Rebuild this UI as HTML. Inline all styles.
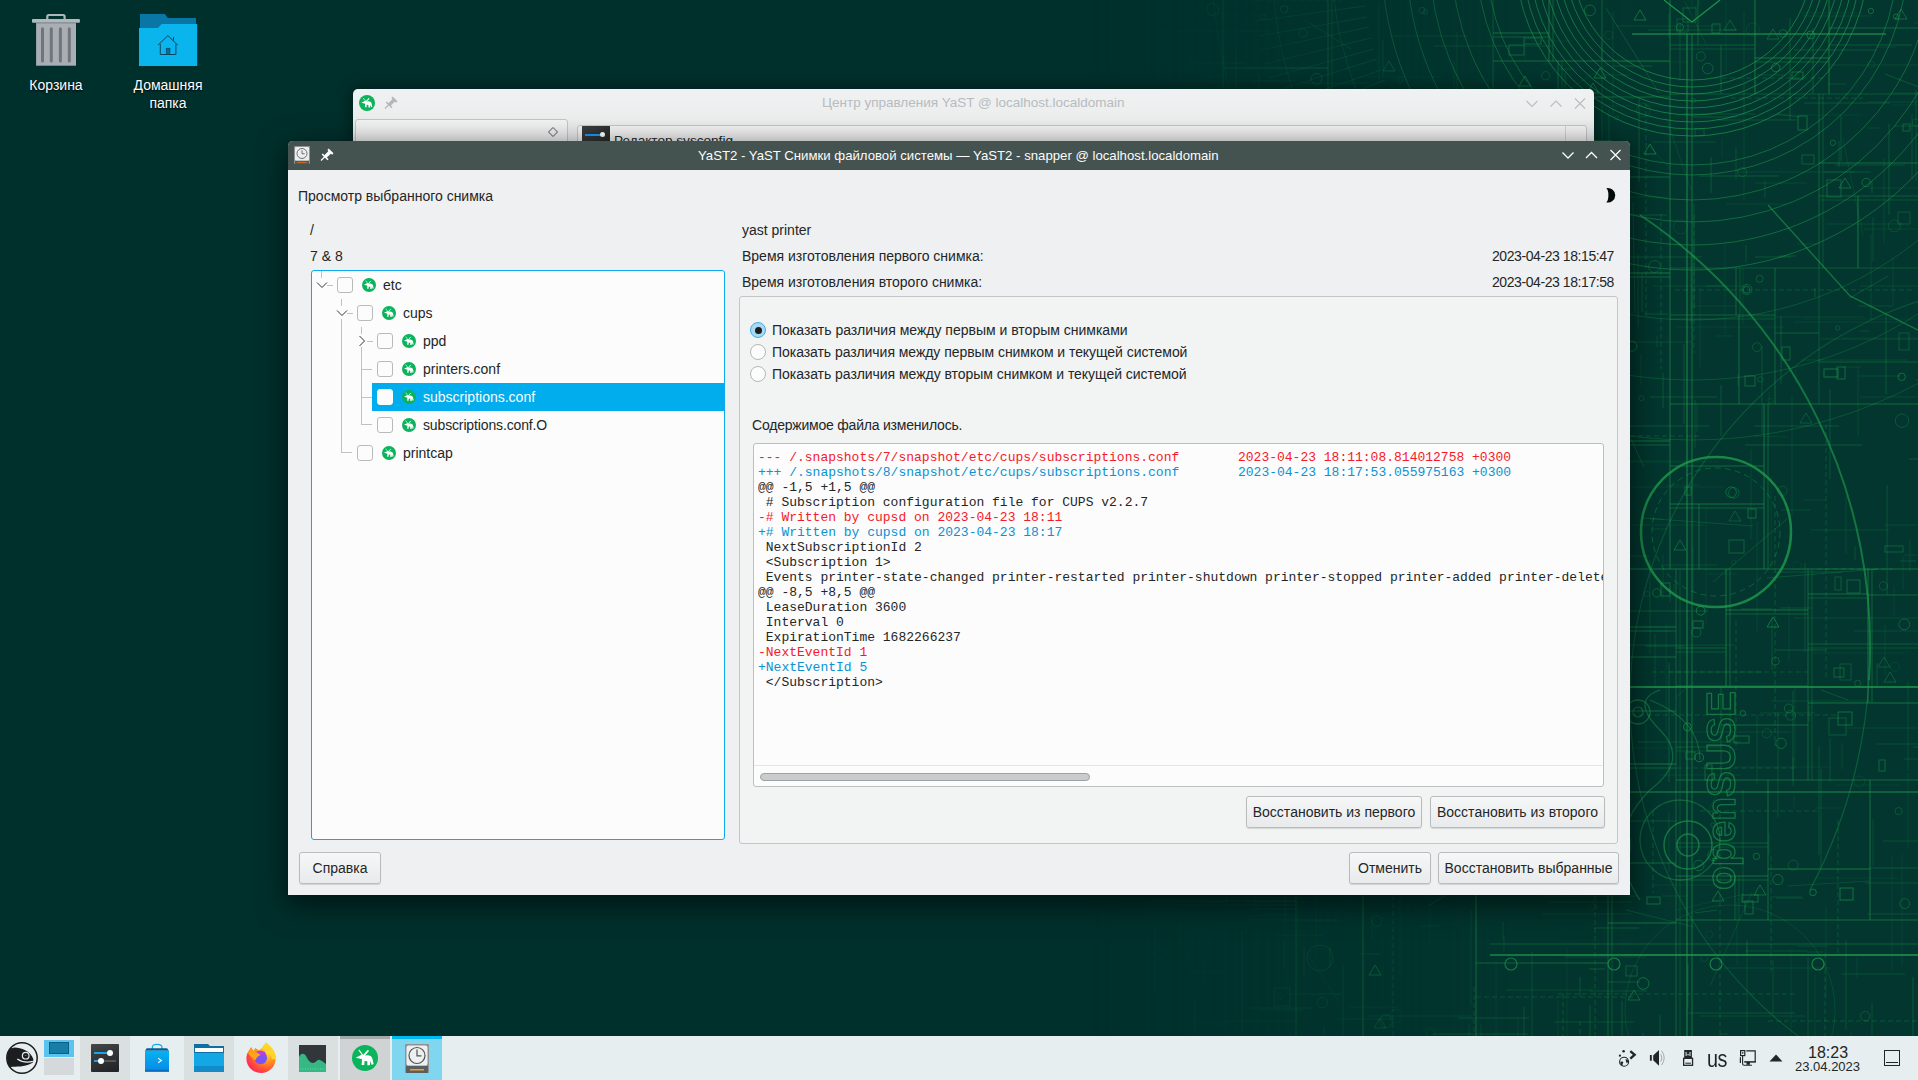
<!DOCTYPE html>
<html><head><meta charset="utf-8">
<style>
*{margin:0;padding:0;box-sizing:border-box}
html,body{width:1918px;height:1080px;overflow:hidden}
body{background:#00302c;font-family:"Liberation Sans",sans-serif;position:relative;color:#232627}
.a{position:absolute}
.t{position:absolute;font-size:14px;line-height:16px;white-space:nowrap;color:#232627}
.mono{position:absolute;font-family:"Liberation Mono",monospace;font-size:13px;line-height:15px;white-space:pre;color:#232627}
.btn{position:absolute;border:1px solid #b9bbbe;border-radius:3px;background:linear-gradient(#f6f7f7,#e9eaeb);box-shadow:0 1px 1px rgba(0,0,0,.12);font-size:14px;line-height:16px;text-align:center;color:#232627;white-space:nowrap}
.cb{position:absolute;width:16px;height:16px;border:1px solid #b8babc;border-radius:3px;background:#fcfcfc}
</style></head><body>
<svg width="0" height="0" style="position:absolute"><defs><symbol id="yast" viewBox="0 0 26 26"><circle cx="13" cy="13" r="13" fill="#0bb35c"/><path d="M3.7 12.7L9.5 9.8Q11 9 12.5 10L13.5 10.4Q19 9.6 20.3 13.2L21.6 19L19.6 19.9L18.6 16L17.8 20.2L15.4 20.2L15.3 16.2L12.6 16L12.2 19.9L9.6 19.9L10 14.3Q8 13.6 3.7 12.7Z" fill="#fff"/><path d="M10.5 9.8L6.8 4.8" stroke="#fff" stroke-width="1.1"/><path d="M12 10.4L16.4 5.4" stroke="#fff" stroke-width="1.7"/></symbol></defs></svg>
<svg class="a" style="left:0;top:0" width="1918" height="1080" viewBox="0 0 1918 1080">
<defs><linearGradient id="fade" x1="0" y1="0" x2="1918" y2="0" gradientUnits="userSpaceOnUse"><stop offset="0.57" stop-color="#fff" stop-opacity="0"/><stop offset="0.68" stop-color="#fff" stop-opacity="0.4"/><stop offset="0.78" stop-color="#fff" stop-opacity="0.85"/><stop offset="0.86" stop-color="#fff" stop-opacity="1"/></linearGradient><mask id="m"><rect width="1918" height="1080" fill="url(#fade)"/></mask></defs>
<rect width="1918" height="1080" fill="#00302c"/>
<rect width="1918" height="1080" fill="#02362e" mask="url(#m)"/>
<g mask="url(#m)" fill="none" stroke="#21a04f" stroke-width="1">
<path d="M1150 569H1918" stroke-opacity="0.56" stroke-width="1" />
<path d="M1670 0V569" stroke-opacity="0.56" stroke-width="1" />
<path d="M1150 177H1670" stroke-opacity="0.46" stroke-width="1" />
<path d="M1493 0V177" stroke-opacity="0.34" stroke-width="1" />
<path d="M1328 0V177" stroke-opacity="0.50" stroke-width="1" />
<path d="M1332 0V177" stroke-opacity="0.35" stroke-width="1" />
<path d="M1223 0V177" stroke-opacity="0.62" stroke-width="1" />
<path d="M1150 110H1223" stroke-opacity="0.35" stroke-width="1" />
<circle cx="1212.6" cy="9.5" r="5.9" stroke-opacity="0.53" stroke-width="1" />
<path d="M1170 171L1176 161L1182 171Z" stroke-opacity="0.46" stroke-width="1" />
<path d="M1223 68H1328" stroke-opacity="0.63" stroke-width="1" />
<circle cx="1263.4" cy="17.2" r="2.7" stroke-opacity="0.34" stroke-width="1" />
<circle cx="1284.3" cy="9.2" r="3.7" stroke-opacity="0.50" stroke-width="1" />
<circle cx="1303.0" cy="32.9" r="4.2" stroke-opacity="0.39" stroke-width="1" />
<circle cx="1316.5" cy="78.8" r="5.5" stroke-opacity="0.52" stroke-width="1" />
<circle cx="1422.1" cy="10.4" r="3.1" stroke-opacity="0.31" stroke-width="1" />
<path d="M1361 134L1367 124L1373 134Z" stroke-opacity="0.58" stroke-width="1" />
<path d="M1383 71L1389 61L1395 71Z" stroke-opacity="0.46" stroke-width="1" />
<path d="M1493 61H1670" stroke-opacity="0.56" stroke-width="1" />
<path d="M1549 0V61" stroke-opacity="0.63" stroke-width="1" />
<path d="M1553 0V61" stroke-opacity="0.44" stroke-width="1" />
<path d="M1493 33H1549" stroke-opacity="0.62" stroke-width="1" />
<path d="M1493 37H1549" stroke-opacity="0.43" stroke-width="1" />
<rect x="1509" y="45" width="15" height="10" stroke-opacity="0.49" stroke-width="1" />
<rect x="1524" y="38" width="17" height="6" stroke-opacity="0.48" stroke-width="1" />
<path d="M1602 0V61" stroke-opacity="0.39" stroke-width="1" />
<circle cx="1589.9" cy="10.4" r="5.4" stroke-opacity="0.45" stroke-width="1" />
<path d="M1634 20L1640 10L1646 20Z" stroke-opacity="0.57" stroke-width="1" />
<path d="M1558 61V177" stroke-opacity="0.43" stroke-width="1" />
<path d="M1562 61V177" stroke-opacity="0.30" stroke-width="1" />
<path d="M1493 102H1558" stroke-opacity="0.62" stroke-width="1" />
<path d="M1519 86L1525 76L1531 86Z" stroke-opacity="0.52" stroke-width="1" />
<circle cx="1524.4" cy="162.7" r="5.4" stroke-opacity="0.33" stroke-width="1" />
<rect x="1506" y="160" width="8" height="12" stroke-opacity="0.56" stroke-width="1" />
<rect x="1523" y="135" width="16" height="10" stroke-opacity="0.32" stroke-width="1" />
<path d="M1558 97H1670" stroke-opacity="0.41" stroke-width="1" />
<path d="M1587 93L1593 83L1599 93Z" stroke-opacity="0.51" stroke-width="1" />
<path d="M1594 78L1600 68L1606 78Z" stroke-opacity="0.56" stroke-width="1" />
<rect x="1586" y="143" width="16" height="14" stroke-opacity="0.44" stroke-width="1" />
<rect x="1595" y="141" width="16" height="10" stroke-opacity="0.52" stroke-width="1" />
<path d="M1644 154L1650 144L1656 154Z" stroke-opacity="0.59" stroke-width="1" />
<path d="M1414 177V569" stroke-opacity="0.49" stroke-width="1" />
<path d="M1418 177V569" stroke-opacity="0.34" stroke-width="1" />
<path d="M1150 442H1414" stroke-opacity="0.47" stroke-width="1" />
<path d="M1150 334H1414" stroke-opacity="0.36" stroke-width="1" />
<path d="M1299 177V334" stroke-opacity="0.45" stroke-width="1" />
<rect x="1158" y="203" width="14" height="9" stroke-opacity="0.43" stroke-width="1" />
<rect x="1237" y="187" width="9" height="7" stroke-opacity="0.44" stroke-width="1" />
<circle cx="1401.6" cy="253.1" r="4.0" stroke-opacity="0.46" stroke-width="1" />
<path d="M1299 334V442" stroke-opacity="0.33" stroke-width="1" />
<path d="M1303 334V442" stroke-opacity="0.23" stroke-width="1" />
<circle cx="1212.1" cy="367.8" r="2.9" stroke-opacity="0.42" stroke-width="1" />
<path d="M1203 351L1209 341L1215 351Z" stroke-opacity="0.48" stroke-width="1" />
<path d="M1283 442V569" stroke-opacity="0.63" stroke-width="1" />
<path d="M1287 442V569" stroke-opacity="0.44" stroke-width="1" />
<path d="M1197 442V569" stroke-opacity="0.44" stroke-width="1" />
<rect x="1159" y="487" width="8" height="8" stroke-opacity="0.44" stroke-width="1" />
<circle cx="1182.7" cy="522.9" r="3.6" stroke-opacity="0.41" stroke-width="1" />
<circle cx="1265.8" cy="512.3" r="5.9" stroke-opacity="0.43" stroke-width="1" />
<path d="M1347 442V569" stroke-opacity="0.55" stroke-width="1" />
<path d="M1351 442V569" stroke-opacity="0.38" stroke-width="1" />
<rect x="1299" y="553" width="11" height="10" stroke-opacity="0.45" stroke-width="1" />
<rect x="1365" y="498" width="13" height="11" stroke-opacity="0.34" stroke-width="1" />
<circle cx="1394.2" cy="541.0" r="4.4" stroke-opacity="0.30" stroke-width="1" />
<path d="M1414 441H1670" stroke-opacity="0.57" stroke-width="1" />
<path d="M1414 445H1670" stroke-opacity="0.40" stroke-width="1" />
<path d="M1414 273H1670" stroke-opacity="0.65" stroke-width="1" />
<path d="M1414 277H1670" stroke-opacity="0.45" stroke-width="1" />
<path d="M1539 177V273" stroke-opacity="0.53" stroke-width="1" />
<path d="M1521 273V441" stroke-opacity="0.49" stroke-width="1" />
<path d="M1525 273V441" stroke-opacity="0.34" stroke-width="1" />
<rect x="1420" y="329" width="16" height="8" stroke-opacity="0.50" stroke-width="1" />
<circle cx="1472.3" cy="385.0" r="4.9" stroke-opacity="0.33" stroke-width="1" />
<circle cx="1632.0" cy="346.2" r="5.0" stroke-opacity="0.47" stroke-width="1" />
<path d="M1540 441V569" stroke-opacity="0.62" stroke-width="1" />
<path d="M1544 441V569" stroke-opacity="0.43" stroke-width="1" />
<path d="M1414 523H1540" stroke-opacity="0.37" stroke-width="1" />
<path d="M1414 527H1540" stroke-opacity="0.26" stroke-width="1" />
<path d="M1493 549L1499 539L1505 549Z" stroke-opacity="0.39" stroke-width="1" />
<rect x="1516" y="531" width="13" height="12" stroke-opacity="0.44" stroke-width="1" />
<path d="M1587 441V569" stroke-opacity="0.51" stroke-width="1" />
<circle cx="1601.5" cy="457.2" r="3.7" stroke-opacity="0.58" stroke-width="1" />
<path d="M1670 268H1918" stroke-opacity="0.32" stroke-width="1" />
<path d="M1670 94H1918" stroke-opacity="0.34" stroke-width="1" />
<path d="M1755 0V94" stroke-opacity="0.61" stroke-width="1" />
<path d="M1670 45H1755" stroke-opacity="0.36" stroke-width="1" />
<path d="M1670 49H1755" stroke-opacity="0.25" stroke-width="1" />
<path d="M1698 0V45" stroke-opacity="0.37" stroke-width="1" />
<rect x="1677" y="19" width="11" height="13" stroke-opacity="0.34" stroke-width="1" />
<circle cx="1679.8" cy="27.2" r="3.7" stroke-opacity="0.45" stroke-width="1" />
<rect x="1683" y="8" width="13" height="14" stroke-opacity="0.39" stroke-width="1" />
<path d="M1724 30L1730 20L1736 30Z" stroke-opacity="0.38" stroke-width="1" />
<rect x="1712" y="24" width="8" height="9" stroke-opacity="0.46" stroke-width="1" />
<path d="M1721 45V94" stroke-opacity="0.36" stroke-width="1" />
<circle cx="1700.8" cy="56.4" r="4.6" stroke-opacity="0.34" stroke-width="1" />
<circle cx="1707.7" cy="68.5" r="5.3" stroke-opacity="0.40" stroke-width="1" />
<path d="M1829 0V94" stroke-opacity="0.60" stroke-width="1" />
<path d="M1755 58H1829" stroke-opacity="0.56" stroke-width="1" />
<path d="M1755 62H1829" stroke-opacity="0.39" stroke-width="1" />
<path d="M1767 39L1773 29L1779 39Z" stroke-opacity="0.41" stroke-width="1" />
<circle cx="1783.0" cy="33.5" r="3.9" stroke-opacity="0.40" stroke-width="1" />
<circle cx="1810.8" cy="34.9" r="4.0" stroke-opacity="0.54" stroke-width="1" />
<rect x="1792" y="72" width="11" height="7" stroke-opacity="0.52" stroke-width="1" />
<circle cx="1775.7" cy="67.6" r="4.2" stroke-opacity="0.57" stroke-width="1" />
<path d="M1829 28H1918" stroke-opacity="0.46" stroke-width="1" />
<circle cx="1870.9" cy="10.9" r="2.7" stroke-opacity="0.50" stroke-width="1" />
<path d="M1895 19L1901 9L1907 19Z" stroke-opacity="0.47" stroke-width="1" />
<circle cx="1896.1" cy="16.6" r="2.6" stroke-opacity="0.50" stroke-width="1" />
<path d="M1819 94V268" stroke-opacity="0.41" stroke-width="1" />
<path d="M1823 94V268" stroke-opacity="0.29" stroke-width="1" />
<rect x="1798" y="116" width="9" height="14" stroke-opacity="0.50" stroke-width="1" />
<rect x="1695" y="129" width="9" height="7" stroke-opacity="0.31" stroke-width="1" />
<rect x="1802" y="155" width="12" height="9" stroke-opacity="0.39" stroke-width="1" />
<path d="M1819 196H1918" stroke-opacity="0.36" stroke-width="1" />
<path d="M1819 200H1918" stroke-opacity="0.25" stroke-width="1" />
<path d="M1819 163H1918" stroke-opacity="0.53" stroke-width="1" />
<circle cx="1832.9" cy="142.8" r="2.7" stroke-opacity="0.42" stroke-width="1" />
<rect x="1903" y="124" width="7" height="7" stroke-opacity="0.41" stroke-width="1" />
<circle cx="1866.2" cy="182.5" r="4.2" stroke-opacity="0.49" stroke-width="1" />
<rect x="1827" y="180" width="14" height="17" stroke-opacity="0.43" stroke-width="1" />
<path d="M1839 188L1845 178L1851 188Z" stroke-opacity="0.49" stroke-width="1" />
<path d="M1858 196V268" stroke-opacity="0.62" stroke-width="1" />
<rect x="1898" y="212" width="12" height="12" stroke-opacity="0.31" stroke-width="1" />
<path d="M1670 404H1918" stroke-opacity="0.52" stroke-width="1" />
<path d="M1775 268V404" stroke-opacity="0.46" stroke-width="1" />
<path d="M1670 315H1775" stroke-opacity="0.41" stroke-width="1" />
<path d="M1670 319H1775" stroke-opacity="0.29" stroke-width="1" />
<path d="M1736 268V315" stroke-opacity="0.41" stroke-width="1" />
<path d="M1740 268V315" stroke-opacity="0.29" stroke-width="1" />
<circle cx="1746.6" cy="289.8" r="3.4" stroke-opacity="0.47" stroke-width="1" />
<circle cx="1759.6" cy="278.8" r="3.5" stroke-opacity="0.36" stroke-width="1" />
<circle cx="1746.9" cy="289.5" r="5.1" stroke-opacity="0.39" stroke-width="1" />
<path d="M1739 315V404" stroke-opacity="0.53" stroke-width="1" />
<circle cx="1760.3" cy="379.4" r="2.7" stroke-opacity="0.31" stroke-width="1" />
<rect x="1745" y="376" width="10" height="10" stroke-opacity="0.47" stroke-width="1" />
<circle cx="1756.9" cy="347.1" r="4.4" stroke-opacity="0.31" stroke-width="1" />
<path d="M1819 268V404" stroke-opacity="0.34" stroke-width="1" />
<path d="M1775 333H1819" stroke-opacity="0.39" stroke-width="1" />
<rect x="1782" y="347" width="8" height="13" stroke-opacity="0.41" stroke-width="1" />
<path d="M1819 362H1918" stroke-opacity="0.39" stroke-width="1" />
<rect x="1899" y="333" width="10" height="17" stroke-opacity="0.34" stroke-width="1" />
<rect x="1837" y="367" width="8" height="12" stroke-opacity="0.50" stroke-width="1" />
<rect x="1824" y="369" width="14" height="8" stroke-opacity="0.56" stroke-width="1" />
<circle cx="1901.7" cy="376.8" r="3.7" stroke-opacity="0.51" stroke-width="1" />
<path d="M1764 404V569" stroke-opacity="0.59" stroke-width="1" />
<path d="M1768 404V569" stroke-opacity="0.41" stroke-width="1" />
<path d="M1670 504H1764" stroke-opacity="0.57" stroke-width="1" />
<path d="M1670 508H1764" stroke-opacity="0.40" stroke-width="1" />
<path d="M1670 466H1764" stroke-opacity="0.53" stroke-width="1" />
<rect x="1685" y="487" width="6" height="8" stroke-opacity="0.45" stroke-width="1" />
<circle cx="1733.8" cy="492.9" r="5.3" stroke-opacity="0.36" stroke-width="1" />
<circle cx="1731.1" cy="492.2" r="5.3" stroke-opacity="0.49" stroke-width="1" />
<path d="M1699 504V569" stroke-opacity="0.48" stroke-width="1" />
<path d="M1674 550L1680 540L1686 550Z" stroke-opacity="0.48" stroke-width="1" />
<rect x="1729" y="540" width="15" height="13" stroke-opacity="0.43" stroke-width="1" />
<path d="M1729 521L1735 511L1741 521Z" stroke-opacity="0.34" stroke-width="1" />
<rect x="1748" y="509" width="8" height="9" stroke-opacity="0.53" stroke-width="1" />
<rect x="1885" y="546" width="18" height="6" stroke-opacity="0.42" stroke-width="1" />
<path d="M1800 423L1806 413L1812 423Z" stroke-opacity="0.33" stroke-width="1" />
<path d="M1676 569V1036" stroke-opacity="0.41" stroke-width="1" />
<path d="M1680 569V1036" stroke-opacity="0.28" stroke-width="1" />
<path d="M1476 569V1036" stroke-opacity="0.63" stroke-width="1" />
<path d="M1150 799H1476" stroke-opacity="0.33" stroke-width="1" />
<path d="M1150 803H1476" stroke-opacity="0.23" stroke-width="1" />
<path d="M1350 569V799" stroke-opacity="0.45" stroke-width="1" />
<path d="M1150 673H1350" stroke-opacity="0.56" stroke-width="1" />
<path d="M1264 569V673" stroke-opacity="0.41" stroke-width="1" />
<path d="M1268 569V673" stroke-opacity="0.29" stroke-width="1" />
<circle cx="1168.6" cy="603.2" r="5.3" stroke-opacity="0.54" stroke-width="1" />
<circle cx="1250.7" cy="584.5" r="3.1" stroke-opacity="0.42" stroke-width="1" />
<path d="M1260 673V799" stroke-opacity="0.52" stroke-width="1" />
<rect x="1193" y="734" width="10" height="9" stroke-opacity="0.57" stroke-width="1" />
<rect x="1243" y="697" width="7" height="13" stroke-opacity="0.31" stroke-width="1" />
<rect x="1171" y="698" width="14" height="14" stroke-opacity="0.48" stroke-width="1" />
<circle cx="1415.4" cy="593.4" r="4.1" stroke-opacity="0.36" stroke-width="1" />
<circle cx="1456.7" cy="767.7" r="5.3" stroke-opacity="0.48" stroke-width="1" />
<path d="M1355 726L1361 716L1367 726Z" stroke-opacity="0.33" stroke-width="1" />
<path d="M1296 799V1036" stroke-opacity="0.57" stroke-width="1" />
<path d="M1150 901H1296" stroke-opacity="0.57" stroke-width="1" />
<path d="M1150 905H1296" stroke-opacity="0.40" stroke-width="1" />
<path d="M1226 799V901" stroke-opacity="0.50" stroke-width="1" />
<circle cx="1238.2" cy="825.6" r="4.1" stroke-opacity="0.41" stroke-width="1" />
<rect x="1268" y="810" width="13" height="11" stroke-opacity="0.42" stroke-width="1" />
<circle cx="1159.4" cy="954.5" r="5.1" stroke-opacity="0.40" stroke-width="1" />
<rect x="1274" y="988" width="16" height="18" stroke-opacity="0.30" stroke-width="1" />
<path d="M1296 889H1476" stroke-opacity="0.42" stroke-width="1" />
<path d="M1296 893H1476" stroke-opacity="0.29" stroke-width="1" />
<path d="M1396 799V889" stroke-opacity="0.57" stroke-width="1" />
<path d="M1400 799V889" stroke-opacity="0.40" stroke-width="1" />
<rect x="1459" y="808" width="9" height="18" stroke-opacity="0.43" stroke-width="1" />
<circle cx="1450.0" cy="818.7" r="4.4" stroke-opacity="0.59" stroke-width="1" />
<path d="M1363 889V1036" stroke-opacity="0.60" stroke-width="1" />
<circle cx="1322.3" cy="1002.6" r="5.2" stroke-opacity="0.30" stroke-width="1" />
<path d="M1369 975L1375 965L1381 975Z" stroke-opacity="0.59" stroke-width="1" />
<path d="M1374 1028L1380 1018L1386 1028Z" stroke-opacity="0.36" stroke-width="1" />
<path d="M1476 711H1676" stroke-opacity="0.48" stroke-width="1" />
<path d="M1603 569V711" stroke-opacity="0.46" stroke-width="1" />
<path d="M1607 569V711" stroke-opacity="0.33" stroke-width="1" />
<path d="M1476 656H1603" stroke-opacity="0.48" stroke-width="1" />
<path d="M1548 569V656" stroke-opacity="0.52" stroke-width="1" />
<circle cx="1526.5" cy="606.3" r="5.4" stroke-opacity="0.56" stroke-width="1" />
<circle cx="1587.3" cy="589.4" r="3.6" stroke-opacity="0.40" stroke-width="1" />
<circle cx="1588.0" cy="583.2" r="3.9" stroke-opacity="0.41" stroke-width="1" />
<circle cx="1562.1" cy="602.9" r="4.7" stroke-opacity="0.30" stroke-width="1" />
<path d="M1553 656V711" stroke-opacity="0.33" stroke-width="1" />
<path d="M1563 670L1569 660L1575 670Z" stroke-opacity="0.55" stroke-width="1" />
<path d="M1576 675L1582 665L1588 675Z" stroke-opacity="0.37" stroke-width="1" />
<path d="M1587 671L1593 661L1599 671Z" stroke-opacity="0.36" stroke-width="1" />
<path d="M1603 627H1676" stroke-opacity="0.56" stroke-width="1" />
<path d="M1603 631H1676" stroke-opacity="0.39" stroke-width="1" />
<path d="M1629 569V627" stroke-opacity="0.48" stroke-width="1" />
<circle cx="1656.7" cy="592.9" r="4.2" stroke-opacity="0.41" stroke-width="1" />
<rect x="1661" y="583" width="9" height="13" stroke-opacity="0.47" stroke-width="1" />
<path d="M1603 657H1676" stroke-opacity="0.47" stroke-width="1" />
<path d="M1476 863H1676" stroke-opacity="0.48" stroke-width="1" />
<path d="M1541 711V863" stroke-opacity="0.48" stroke-width="1" />
<path d="M1545 711V863" stroke-opacity="0.33" stroke-width="1" />
<path d="M1476 778H1541" stroke-opacity="0.31" stroke-width="1" />
<path d="M1476 782H1541" stroke-opacity="0.22" stroke-width="1" />
<circle cx="1491.0" cy="764.3" r="3.5" stroke-opacity="0.47" stroke-width="1" />
<rect x="1508" y="734" width="16" height="13" stroke-opacity="0.41" stroke-width="1" />
<rect x="1510" y="718" width="13" height="7" stroke-opacity="0.36" stroke-width="1" />
<path d="M1498 819L1504 809L1510 819Z" stroke-opacity="0.44" stroke-width="1" />
<circle cx="1485.5" cy="824.8" r="2.6" stroke-opacity="0.47" stroke-width="1" />
<path d="M1541 764H1676" stroke-opacity="0.61" stroke-width="1" />
<path d="M1541 768H1676" stroke-opacity="0.43" stroke-width="1" />
<circle cx="1582.0" cy="747.5" r="3.4" stroke-opacity="0.52" stroke-width="1" />
<path d="M1618 739L1624 729L1630 739Z" stroke-opacity="0.49" stroke-width="1" />
<rect x="1614" y="839" width="16" height="13" stroke-opacity="0.57" stroke-width="1" />
<path d="M1608 863V1036" stroke-opacity="0.42" stroke-width="1" />
<path d="M1612 863V1036" stroke-opacity="0.30" stroke-width="1" />
<path d="M1476 963H1608" stroke-opacity="0.51" stroke-width="1" />
<path d="M1608 923H1676" stroke-opacity="0.55" stroke-width="1" />
<rect x="1647" y="897" width="13" height="7" stroke-opacity="0.52" stroke-width="1" />
<circle cx="1643.2" cy="983.5" r="5.8" stroke-opacity="0.55" stroke-width="1" />
<rect x="1626" y="966" width="11" height="10" stroke-opacity="0.39" stroke-width="1" />
<path d="M1628 1000L1634 990L1640 1000Z" stroke-opacity="0.45" stroke-width="1" />
<path d="M1676 780H1918" stroke-opacity="0.53" stroke-width="1" />
<path d="M1808 569V780" stroke-opacity="0.46" stroke-width="1" />
<path d="M1812 569V780" stroke-opacity="0.32" stroke-width="1" />
<path d="M1676 686H1808" stroke-opacity="0.45" stroke-width="1" />
<path d="M1726 569V686" stroke-opacity="0.62" stroke-width="1" />
<path d="M1730 569V686" stroke-opacity="0.43" stroke-width="1" />
<path d="M1676 648H1726" stroke-opacity="0.42" stroke-width="1" />
<path d="M1676 652H1726" stroke-opacity="0.29" stroke-width="1" />
<circle cx="1700.6" cy="610.7" r="4.4" stroke-opacity="0.57" stroke-width="1" />
<rect x="1693" y="621" width="10" height="7" stroke-opacity="0.55" stroke-width="1" />
<circle cx="1696.3" cy="632.4" r="4.7" stroke-opacity="0.38" stroke-width="1" />
<path d="M1726 610H1808" stroke-opacity="0.57" stroke-width="1" />
<path d="M1726 614H1808" stroke-opacity="0.40" stroke-width="1" />
<path d="M1767 627L1773 617L1779 627Z" stroke-opacity="0.59" stroke-width="1" />
<circle cx="1775.5" cy="661.2" r="3.9" stroke-opacity="0.38" stroke-width="1" />
<path d="M1721 686V780" stroke-opacity="0.32" stroke-width="1" />
<path d="M1676 747H1721" stroke-opacity="0.32" stroke-width="1" />
<path d="M1676 751H1721" stroke-opacity="0.23" stroke-width="1" />
<circle cx="1687.4" cy="726.9" r="3.9" stroke-opacity="0.59" stroke-width="1" />
<rect x="1686" y="752" width="9" height="7" stroke-opacity="0.47" stroke-width="1" />
<rect x="1705" y="765" width="7" height="15" stroke-opacity="0.44" stroke-width="1" />
<circle cx="1699.2" cy="757.4" r="4.4" stroke-opacity="0.60" stroke-width="1" />
<path d="M1721 725H1808" stroke-opacity="0.49" stroke-width="1" />
<circle cx="1790.6" cy="715.4" r="4.8" stroke-opacity="0.34" stroke-width="1" />
<circle cx="1742.8" cy="713.3" r="2.7" stroke-opacity="0.51" stroke-width="1" />
<circle cx="1788.8" cy="708.4" r="4.4" stroke-opacity="0.39" stroke-width="1" />
<circle cx="1781.0" cy="743.3" r="5.2" stroke-opacity="0.44" stroke-width="1" />
<rect x="1734" y="736" width="15" height="7" stroke-opacity="0.51" stroke-width="1" />
<path d="M1808 644H1918" stroke-opacity="0.36" stroke-width="1" />
<path d="M1808 648H1918" stroke-opacity="0.25" stroke-width="1" />
<path d="M1868 569V644" stroke-opacity="0.60" stroke-width="1" />
<path d="M1872 569V644" stroke-opacity="0.42" stroke-width="1" />
<path d="M1808 594H1868" stroke-opacity="0.50" stroke-width="1" />
<path d="M1808 598H1868" stroke-opacity="0.35" stroke-width="1" />
<rect x="1835" y="577" width="6" height="13" stroke-opacity="0.36" stroke-width="1" />
<rect x="1847" y="580" width="13" height="13" stroke-opacity="0.46" stroke-width="1" />
<path d="M1868 595H1918" stroke-opacity="0.45" stroke-width="1" />
<circle cx="1883.4" cy="585.9" r="4.2" stroke-opacity="0.31" stroke-width="1" />
<circle cx="1904.3" cy="624.3" r="5.4" stroke-opacity="0.43" stroke-width="1" />
<path d="M1808 703H1918" stroke-opacity="0.56" stroke-width="1" />
<path d="M1868 644V703" stroke-opacity="0.58" stroke-width="1" />
<path d="M1872 644V703" stroke-opacity="0.41" stroke-width="1" />
<rect x="1834" y="668" width="10" height="9" stroke-opacity="0.44" stroke-width="1" />
<circle cx="1857.7" cy="683.2" r="3.1" stroke-opacity="0.35" stroke-width="1" />
<rect x="1840" y="664" width="11" height="16" stroke-opacity="0.33" stroke-width="1" />
<path d="M1878 667L1884 657L1890 667Z" stroke-opacity="0.32" stroke-width="1" />
<path d="M1884 682L1890 672L1896 682Z" stroke-opacity="0.37" stroke-width="1" />
<rect x="1879" y="760" width="6" height="11" stroke-opacity="0.46" stroke-width="1" />
<rect x="1829" y="718" width="17" height="17" stroke-opacity="0.35" stroke-width="1" />
<rect x="1838" y="712" width="14" height="13" stroke-opacity="0.53" stroke-width="1" />
<path d="M1676 920H1918" stroke-opacity="0.51" stroke-width="1" />
<path d="M1768 780V920" stroke-opacity="0.53" stroke-width="1" />
<path d="M1676 876H1768" stroke-opacity="0.54" stroke-width="1" />
<path d="M1676 880H1768" stroke-opacity="0.38" stroke-width="1" />
<path d="M1676 843H1768" stroke-opacity="0.36" stroke-width="1" />
<path d="M1676 847H1768" stroke-opacity="0.25" stroke-width="1" />
<circle cx="1698.8" cy="865.5" r="5.2" stroke-opacity="0.42" stroke-width="1" />
<circle cx="1713.4" cy="855.1" r="5.7" stroke-opacity="0.34" stroke-width="1" />
<circle cx="1756.4" cy="856.4" r="3.2" stroke-opacity="0.46" stroke-width="1" />
<path d="M1735 876V920" stroke-opacity="0.39" stroke-width="1" />
<path d="M1739 876V920" stroke-opacity="0.28" stroke-width="1" />
<path d="M1712 901L1718 891L1724 901Z" stroke-opacity="0.50" stroke-width="1" />
<rect x="1742" y="895" width="16" height="7" stroke-opacity="0.51" stroke-width="1" />
<path d="M1754 895L1760 885L1766 895Z" stroke-opacity="0.49" stroke-width="1" />
<rect x="1745" y="901" width="8" height="13" stroke-opacity="0.49" stroke-width="1" />
<path d="M1870 780V920" stroke-opacity="0.56" stroke-width="1" />
<path d="M1768 869H1870" stroke-opacity="0.61" stroke-width="1" />
<circle cx="1777.9" cy="879.6" r="5.1" stroke-opacity="0.48" stroke-width="1" />
<rect x="1840" y="888" width="13" height="12" stroke-opacity="0.58" stroke-width="1" />
<circle cx="1813.0" cy="892.4" r="3.3" stroke-opacity="0.55" stroke-width="1" />
<path d="M1870 868H1918" stroke-opacity="0.32" stroke-width="1" />
<circle cx="1898.6" cy="811.1" r="3.6" stroke-opacity="0.32" stroke-width="1" />
<circle cx="1904.7" cy="903.6" r="4.9" stroke-opacity="0.39" stroke-width="1" />
<path d="M1737 902V965" stroke-opacity="0.14" stroke-width="1" />
<path d="M1826 224H1903" stroke-opacity="0.20" stroke-width="1" />
<path d="M1590 1005V1106" stroke-opacity="0.30" stroke-width="1" />
<path d="M1603 75H1629" stroke-opacity="0.20" stroke-width="1" />
<path d="M1631 439L1644 467" stroke-opacity="0.29" stroke-width="1" />
<path d="M1400 860V976" stroke-opacity="0.13" stroke-width="1" />
<path d="M1688 964V1007" stroke-opacity="0.30" stroke-width="1" />
<path d="M1503 922V940" stroke-opacity="0.22" stroke-width="1" />
<path d="M1542 914H1632" stroke-opacity="0.16" stroke-width="1" />
<path d="M1867 128H1880" stroke-opacity="0.18" stroke-width="1" />
<path d="M1754 436L1788 437" stroke-opacity="0.14" stroke-width="1" />
<path d="M1384 588V602" stroke-opacity="0.26" stroke-width="1" />
<path d="M1858 306H1892" stroke-opacity="0.21" stroke-width="1" />
<path d="M1483 307V427" stroke-opacity="0.23" stroke-width="1" />
<path d="M1583 410V422" stroke-opacity="0.21" stroke-width="1" />
<circle cx="1430.7" cy="1032.6" r="4.2" stroke-opacity="0.14" stroke-width="1" />
<path d="M1360 954H1381" stroke-opacity="0.25" stroke-width="1" />
<path d="M1459 466H1556" stroke-opacity="0.15" stroke-width="1" />
<path d="M1566 370H1576" stroke-opacity="0.32" stroke-width="1" />
<path d="M1675 327H1785" stroke-opacity="0.15" stroke-width="1" />
<path d="M1546 123H1576" stroke-opacity="0.16" stroke-width="1" />
<circle cx="1461.6" cy="716.1" r="2.1" stroke-opacity="0.25" stroke-width="1" />
<path d="M1237 574H1284" stroke-opacity="0.19" stroke-width="1" />
<path d="M1801 13H1862" stroke-opacity="0.13" stroke-width="1" />
<path d="M1307 954L1339 1002" stroke-opacity="0.19" stroke-width="1" />
<path d="M1163 724V810" stroke-opacity="0.14" stroke-width="1" />
<path d="M1242 931V1040" stroke-opacity="0.27" stroke-width="1" />
<path d="M1599 955H1653" stroke-opacity="0.19" stroke-width="1" />
<path d="M1747 317H1863" stroke-opacity="0.17" stroke-width="1" />
<path d="M1794 795V809" stroke-opacity="0.17" stroke-width="1" />
<path d="M1723 783L1709 809" stroke-opacity="0.16" stroke-width="1" />
<path d="M1522 712H1613" stroke-opacity="0.15" stroke-width="1" />
<path d="M1860 331H1869" stroke-opacity="0.24" stroke-width="1" />
<path d="M1685 2L1706 44" stroke-opacity="0.22" stroke-width="1" />
<path d="M1316 871V956" stroke-opacity="0.21" stroke-width="1" />
<circle cx="1604.6" cy="205.8" r="2.4" stroke-opacity="0.23" stroke-width="1" />
<path d="M1332 397V499" stroke-opacity="0.16" stroke-width="1" />
<path d="M1256 787H1333" stroke-opacity="0.24" stroke-width="1" />
<path d="M1794 618H1836" stroke-opacity="0.21" stroke-width="1" />
<path d="M1345 618V699" stroke-opacity="0.28" stroke-width="1" />
<path d="M1669 663V782" stroke-opacity="0.31" stroke-width="1" />
<path d="M1161 14H1257" stroke-opacity="0.15" stroke-width="1" />
<circle cx="1441.0" cy="868.3" r="3.7" stroke-opacity="0.24" stroke-width="1" />
<path d="M1299 568V644" stroke-opacity="0.27" stroke-width="1" />
<path d="M1797 946H1827" stroke-opacity="0.23" stroke-width="1" />
<path d="M1700 287V367" stroke-opacity="0.17" stroke-width="1" />
<path d="M1389 117H1503" stroke-opacity="0.24" stroke-width="1" />
<path d="M1769 392V445" stroke-opacity="0.13" stroke-width="1" />
<circle cx="1902.0" cy="420.7" r="6.7" stroke-opacity="0.32" stroke-width="1" />
<path d="M1197 1024H1228" stroke-opacity="0.24" stroke-width="1" />
<path d="M1743 268V324" stroke-opacity="0.16" stroke-width="1" />
<path d="M1771 701H1871" stroke-opacity="0.20" stroke-width="1" />
<path d="M1808 957V1039" stroke-opacity="0.28" stroke-width="1" />
<path d="M1367 1016H1471" stroke-opacity="0.22" stroke-width="1" />
<path d="M1285 841V919" stroke-opacity="0.22" stroke-width="1" />
<path d="M1333 245V269" stroke-opacity="0.16" stroke-width="1" />
<path d="M1244 462V471" stroke-opacity="0.25" stroke-width="1" />
<path d="M1669 14V38" stroke-opacity="0.26" stroke-width="1" />
<path d="M1236 49V106" stroke-opacity="0.29" stroke-width="1" />
<path d="M1291 124H1348" stroke-opacity="0.28" stroke-width="1" />
<path d="M1910 539V572" stroke-opacity="0.19" stroke-width="1" />
<circle cx="1275.8" cy="530.7" r="3.6" stroke-opacity="0.30" stroke-width="1" />
<path d="M1741 609H1772" stroke-opacity="0.32" stroke-width="1" />
<path d="M1571 263L1539 318" stroke-opacity="0.17" stroke-width="1" />
<path d="M1201 514L1212 554" stroke-opacity="0.17" stroke-width="1" />
<path d="M1485 326V366" stroke-opacity="0.17" stroke-width="1" />
<path d="M1330 947V967" stroke-opacity="0.32" stroke-width="1" />
<path d="M1579 262V275" stroke-opacity="0.25" stroke-width="1" />
<path d="M1662 896H1687" stroke-opacity="0.18" stroke-width="1" />
<path d="M1864 229H1921" stroke-opacity="0.16" stroke-width="1" />
<path d="M1650 397H1717" stroke-opacity="0.29" stroke-width="1" />
<path d="M1451 91H1521" stroke-opacity="0.18" stroke-width="1" />
<path d="M1257 746V862" stroke-opacity="0.19" stroke-width="1" />
<path d="M1815 288V297" stroke-opacity="0.31" stroke-width="1" />
<path d="M1519 765L1517 792" stroke-opacity="0.14" stroke-width="1" />
<path d="M1912 114V179" stroke-opacity="0.25" stroke-width="1" />
<path d="M1449 199V265" stroke-opacity="0.21" stroke-width="1" />
<path d="M1305 736H1359" stroke-opacity="0.24" stroke-width="1" />
<path d="M1887 485V595" stroke-opacity="0.30" stroke-width="1" />
<path d="M1349 235V273" stroke-opacity="0.17" stroke-width="1" />
<path d="M1622 1001V1058" stroke-opacity="0.32" stroke-width="1" />
<path d="M1666 485H1700" stroke-opacity="0.15" stroke-width="1" />
<path d="M1547 902H1632" stroke-opacity="0.19" stroke-width="1" />
<path d="M1745 445H1862" stroke-opacity="0.31" stroke-width="1" />
<circle cx="1647.0" cy="594.0" r="2.8" stroke-opacity="0.21" stroke-width="1" />
<path d="M1429 119V179" stroke-opacity="0.13" stroke-width="1" />
<path d="M1663 373V408" stroke-opacity="0.32" stroke-width="1" />
<path d="M1546 683H1612" stroke-opacity="0.18" stroke-width="1" />
<path d="M1721 385V436" stroke-opacity="0.29" stroke-width="1" />
<path d="M1466 626V658" stroke-opacity="0.29" stroke-width="1" />
<circle cx="1288.6" cy="738.4" r="2.2" stroke-opacity="0.19" stroke-width="1" />
<path d="M1747 942V1050" stroke-opacity="0.23" stroke-width="1" />
<path d="M1666 118L1691 190" stroke-opacity="0.19" stroke-width="1" />
<path d="M1440 326H1486" stroke-opacity="0.15" stroke-width="1" />
<path d="M1794 322H1902" stroke-opacity="0.17" stroke-width="1" />
<path d="M1836 785H1900" stroke-opacity="0.14" stroke-width="1" />
<path d="M1892 93H1978" stroke-opacity="0.19" stroke-width="1" />
<path d="M1737 172H1855" stroke-opacity="0.20" stroke-width="1" />
<circle cx="1358.4" cy="667.1" r="6.0" stroke-opacity="0.13" stroke-width="1" />
<path d="M1609 110V197" stroke-opacity="0.22" stroke-width="1" />
<path d="M1591 725V829" stroke-opacity="0.29" stroke-width="1" />
<path d="M1580 977V997" stroke-opacity="0.30" stroke-width="1" />
<path d="M1554 690V808" stroke-opacity="0.26" stroke-width="1" />
<path d="M1395 724H1421" stroke-opacity="0.20" stroke-width="1" />
<path d="M1615 501L1628 592" stroke-opacity="0.20" stroke-width="1" />
<path d="M1392 36H1468" stroke-opacity="0.20" stroke-width="1" />
<path d="M1746 245V262" stroke-opacity="0.28" stroke-width="1" />
<path d="M1230 422V470" stroke-opacity="0.14" stroke-width="1" />
<path d="M1253 909H1297" stroke-opacity="0.24" stroke-width="1" />
<circle cx="1654.5" cy="266.5" r="5.9" stroke-opacity="0.32" stroke-width="1" />
<path d="M1633 202L1635 313" stroke-opacity="0.26" stroke-width="1" />
<path d="M1201 291V326" stroke-opacity="0.24" stroke-width="1" />
<path d="M1190 113V223" stroke-opacity="0.14" stroke-width="1" />
<path d="M1488 78V144" stroke-opacity="0.14" stroke-width="1" />
<path d="M1311 627V735" stroke-opacity="0.24" stroke-width="1" />
<path d="M1537 515H1599" stroke-opacity="0.15" stroke-width="1" />
<circle cx="1432.4" cy="674.2" r="2.7" stroke-opacity="0.12" stroke-width="1" />
<path d="M1813 653H1905" stroke-opacity="0.13" stroke-width="1" />
<path d="M1469 1024V1086" stroke-opacity="0.21" stroke-width="1" />
<path d="M1473 235V348" stroke-opacity="0.22" stroke-width="1" />
<path d="M1889 124V215" stroke-opacity="0.31" stroke-width="1" />
<path d="M1680 23V81" stroke-opacity="0.26" stroke-width="1" />
<circle cx="1256.6" cy="338.4" r="2.4" stroke-opacity="0.20" stroke-width="1" />
<path d="M1360 77H1443" stroke-opacity="0.13" stroke-width="1" />
<circle cx="1545.7" cy="75.7" r="4.2" stroke-opacity="0.30" stroke-width="1" />
<path d="M1792 396V516" stroke-opacity="0.16" stroke-width="1" />
<path d="M1215 686L1276 693" stroke-opacity="0.18" stroke-width="1" />
<circle cx="1770.4" cy="400.7" r="2.6" stroke-opacity="0.18" stroke-width="1" />
<path d="M1613 12V115" stroke-opacity="0.16" stroke-width="1" />
<path d="M1669 813V872" stroke-opacity="0.22" stroke-width="1" />
<path d="M1210 902H1223" stroke-opacity="0.28" stroke-width="1" />
<path d="M1829 65H1948" stroke-opacity="0.19" stroke-width="1" />
<circle cx="1782.4" cy="490.8" r="4.7" stroke-opacity="0.29" stroke-width="1" />
<path d="M1332 478H1379" stroke-opacity="0.17" stroke-width="1" />
<path d="M1181 115H1214" stroke-opacity="0.18" stroke-width="1" />
<path d="M1894 586V616" stroke-opacity="0.17" stroke-width="1" />
<path d="M1867 914H1945" stroke-opacity="0.24" stroke-width="1" />
<path d="M1162 909L1184 910" stroke-opacity="0.22" stroke-width="1" />
<path d="M1724 968H1830" stroke-opacity="0.20" stroke-width="1" />
<path d="M1283 556V587" stroke-opacity="0.17" stroke-width="1" />
<path d="M1650 560V654" stroke-opacity="0.19" stroke-width="1" />
<path d="M1706 508V624" stroke-opacity="0.13" stroke-width="1" />
<path d="M1878 569L1767 578" stroke-opacity="0.28" stroke-width="1" />
<path d="M1894 126H1943" stroke-opacity="0.27" stroke-width="1" />
<circle cx="1192.9" cy="455.3" r="5.3" stroke-opacity="0.32" stroke-width="1" />
<path d="M1815 808H1842" stroke-opacity="0.16" stroke-width="1" />
<path d="M1795 687V769" stroke-opacity="0.16" stroke-width="1" />
<path d="M1876 47H1896" stroke-opacity="0.17" stroke-width="1" />
<path d="M1830 738V782" stroke-opacity="0.24" stroke-width="1" />
<path d="M1541 896H1637" stroke-opacity="0.19" stroke-width="1" />
<path d="M1692 402V491" stroke-opacity="0.14" stroke-width="1" />
<path d="M1789 606V662" stroke-opacity="0.16" stroke-width="1" />
<circle cx="1345.3" cy="861.0" r="4.1" stroke-opacity="0.19" stroke-width="1" />
<path d="M1433 1034H1528" stroke-opacity="0.31" stroke-width="1" />
<path d="M1349 1007H1399" stroke-opacity="0.14" stroke-width="1" />
<path d="M1205 953V990" stroke-opacity="0.24" stroke-width="1" />
<path d="M1595 857V897" stroke-opacity="0.14" stroke-width="1" />
<path d="M1909 459H2019" stroke-opacity="0.31" stroke-width="1" />
<path d="M1249 1008H1313" stroke-opacity="0.29" stroke-width="1" />
<path d="M1354 169H1405" stroke-opacity="0.29" stroke-width="1" />
<path d="M1254 719H1336" stroke-opacity="0.19" stroke-width="1" />
<path d="M1778 712V817" stroke-opacity="0.24" stroke-width="1" />
<circle cx="1616.4" cy="117.8" r="2.1" stroke-opacity="0.18" stroke-width="1" />
<path d="M1652 529H1667" stroke-opacity="0.22" stroke-width="1" />
<path d="M1405 162L1441 163" stroke-opacity="0.21" stroke-width="1" />
<path d="M1227 801H1334" stroke-opacity="0.24" stroke-width="1" />
<path d="M1264 915H1293" stroke-opacity="0.25" stroke-width="1" />
<path d="M1847 728H1926" stroke-opacity="0.20" stroke-width="1" />
<path d="M1700 1016H1805" stroke-opacity="0.23" stroke-width="1" />
<path d="M1284 817V858" stroke-opacity="0.12" stroke-width="1" />
<path d="M1869 881L1788 886" stroke-opacity="0.24" stroke-width="1" />
<path d="M1744 12V114" stroke-opacity="0.17" stroke-width="1" />
<path d="M1842 743V769" stroke-opacity="0.19" stroke-width="1" />
<path d="M1565 821H1677" stroke-opacity="0.29" stroke-width="1" />
<path d="M1298 708H1371" stroke-opacity="0.21" stroke-width="1" />
<path d="M1706 286H1724" stroke-opacity="0.28" stroke-width="1" />
<circle cx="1212.7" cy="269.6" r="6.7" stroke-opacity="0.17" stroke-width="1" />
<path d="M1809 705V721" stroke-opacity="0.28" stroke-width="1" />
<path d="M1803 319H1923" stroke-opacity="0.12" stroke-width="1" />
<circle cx="1752.8" cy="29.6" r="6.6" stroke-opacity="0.17" stroke-width="1" />
<path d="M1617 608V641" stroke-opacity="0.23" stroke-width="1" />
<path d="M1215 575V638" stroke-opacity="0.28" stroke-width="1" />
<path d="M1407 451H1451" stroke-opacity="0.19" stroke-width="1" />
<path d="M1807 952H1823" stroke-opacity="0.23" stroke-width="1" />
<path d="M1877 663V687" stroke-opacity="0.29" stroke-width="1" />
<path d="M1354 756H1471" stroke-opacity="0.19" stroke-width="1" />
<path d="M1585 197H1668" stroke-opacity="0.15" stroke-width="1" />
<circle cx="1593.8" cy="906.3" r="3.6" stroke-opacity="0.12" stroke-width="1" />
<path d="M1257 1010H1303" stroke-opacity="0.28" stroke-width="1" />
<path d="M1454 256V375" stroke-opacity="0.31" stroke-width="1" />
<path d="M1555 679V767" stroke-opacity="0.28" stroke-width="1" />
<path d="M1540 444V463" stroke-opacity="0.13" stroke-width="1" />
<path d="M1780 608H1811" stroke-opacity="0.28" stroke-width="1" />
<path d="M1790 18V120" stroke-opacity="0.31" stroke-width="1" />
<circle cx="1547.2" cy="405.0" r="6.7" stroke-opacity="0.15" stroke-width="1" />
<path d="M1828 84H1846" stroke-opacity="0.24" stroke-width="1" />
<path d="M1182 618V658" stroke-opacity="0.23" stroke-width="1" />
<circle cx="1605.0" cy="412.5" r="3.4" stroke-opacity="0.28" stroke-width="1" />
<path d="M1824 172H1871" stroke-opacity="0.28" stroke-width="1" />
<path d="M1165 216V253" stroke-opacity="0.14" stroke-width="1" />
<path d="M1743 790V903" stroke-opacity="0.29" stroke-width="1" />
<circle cx="1871.4" cy="64.5" r="3.4" stroke-opacity="0.16" stroke-width="1" />
<path d="M1247 920H1336" stroke-opacity="0.23" stroke-width="1" />
<path d="M1691 251V323" stroke-opacity="0.24" stroke-width="1" />
<path d="M1757 522V633" stroke-opacity="0.16" stroke-width="1" />
<path d="M1883 841H1985" stroke-opacity="0.27" stroke-width="1" />
<path d="M1781 316V384" stroke-opacity="0.30" stroke-width="1" />
<circle cx="1476.7" cy="193.1" r="5.0" stroke-opacity="0.16" stroke-width="1" />
<path d="M1382 833H1420" stroke-opacity="0.17" stroke-width="1" />
<path d="M1384 666H1402" stroke-opacity="0.12" stroke-width="1" />
<circle cx="1329.9" cy="195.5" r="2.8" stroke-opacity="0.29" stroke-width="1" />
<path d="M1726 204H1786" stroke-opacity="0.16" stroke-width="1" />
<path d="M1419 126H1505" stroke-opacity="0.25" stroke-width="1" />
<path d="M1453 432H1563" stroke-opacity="0.25" stroke-width="1" />
<path d="M1558 1000V1088" stroke-opacity="0.17" stroke-width="1" />
<path d="M1736 147V179" stroke-opacity="0.26" stroke-width="1" />
<path d="M1843 139L1863 235" stroke-opacity="0.16" stroke-width="1" />
<path d="M1506 187V196" stroke-opacity="0.24" stroke-width="1" />
<path d="M1365 727H1384" stroke-opacity="0.21" stroke-width="1" />
<path d="M1558 800V845" stroke-opacity="0.19" stroke-width="1" />
<path d="M1222 151L1181 161" stroke-opacity="0.32" stroke-width="1" />
<path d="M1185 194V287" stroke-opacity="0.30" stroke-width="1" />
<path d="M1166 84V121" stroke-opacity="0.19" stroke-width="1" />
<path d="M1379 2V80" stroke-opacity="0.19" stroke-width="1" />
<path d="M1648 30H1737" stroke-opacity="0.29" stroke-width="1" />
<path d="M1858 367V436" stroke-opacity="0.19" stroke-width="1" />
<path d="M1772 897H1802" stroke-opacity="0.21" stroke-width="1" />
<path d="M1811 530H1889" stroke-opacity="0.21" stroke-width="1" />
<path d="M1466 260H1508" stroke-opacity="0.18" stroke-width="1" />
<path d="M1612 790V888" stroke-opacity="0.31" stroke-width="1" />
<path d="M1298 662H1372" stroke-opacity="0.30" stroke-width="1" />
<path d="M1514 657V775" stroke-opacity="0.30" stroke-width="1" />
<path d="M1757 715V785" stroke-opacity="0.22" stroke-width="1" />
<circle cx="1376.8" cy="921.1" r="5.3" stroke-opacity="0.26" stroke-width="1" />
<path d="M1434 46H1553" stroke-opacity="0.25" stroke-width="1" />
<path d="M1458 101V122" stroke-opacity="0.18" stroke-width="1" />
<path d="M1751 449V539" stroke-opacity="0.18" stroke-width="1" />
<path d="M1509 415V495" stroke-opacity="0.19" stroke-width="1" />
<path d="M1774 572H1842" stroke-opacity="0.26" stroke-width="1" />
<path d="M1688 732H1791" stroke-opacity="0.20" stroke-width="1" />
<path d="M1589 969H1605" stroke-opacity="0.31" stroke-width="1" />
<path d="M1638 742H1740" stroke-opacity="0.27" stroke-width="1" />
<path d="M1776 898H1803" stroke-opacity="0.23" stroke-width="1" />
<path d="M1855 546V560" stroke-opacity="0.25" stroke-width="1" />
<path d="M1873 819V866" stroke-opacity="0.22" stroke-width="1" />
<path d="M1768 115H1862" stroke-opacity="0.15" stroke-width="1" />
<path d="M1461 129V158" stroke-opacity="0.26" stroke-width="1" />
<path d="M1345 185H1414" stroke-opacity="0.32" stroke-width="1" />
<path d="M1872 1003V1035" stroke-opacity="0.27" stroke-width="1" />
<path d="M1877 744H1962" stroke-opacity="0.25" stroke-width="1" />
<path d="M1623 62H1687" stroke-opacity="0.14" stroke-width="1" />
<path d="M1618 445V536" stroke-opacity="0.18" stroke-width="1" />
<path d="M1670 587V602" stroke-opacity="0.27" stroke-width="1" />
<path d="M1235 564V637" stroke-opacity="0.14" stroke-width="1" />
<path d="M1626 645H1734" stroke-opacity="0.27" stroke-width="1" />
<path d="M1904 759H2023" stroke-opacity="0.23" stroke-width="1" />
<path d="M1815 975V1063" stroke-opacity="0.17" stroke-width="1" />
<path d="M1518 1018V1114" stroke-opacity="0.18" stroke-width="1" />
<path d="M1506 724H1566" stroke-opacity="0.15" stroke-width="1" />
<path d="M1868 188H1964" stroke-opacity="0.17" stroke-width="1" />
<circle cx="1733.8" cy="562.3" r="2.3" stroke-opacity="0.16" stroke-width="1" />
<path d="M1687 1013H1795" stroke-opacity="0.29" stroke-width="1" />
<path d="M1217 349V455" stroke-opacity="0.13" stroke-width="1" />
<path d="M1422 372V389" stroke-opacity="0.23" stroke-width="1" />
<path d="M1300 378H1373" stroke-opacity="0.14" stroke-width="1" />
<path d="M1872 181V193" stroke-opacity="0.31" stroke-width="1" />
<path d="M1430 115H1547" stroke-opacity="0.19" stroke-width="1" />
<path d="M1254 813V912" stroke-opacity="0.21" stroke-width="1" />
<path d="M1191 792H1280" stroke-opacity="0.30" stroke-width="1" />
<path d="M1576 610V622" stroke-opacity="0.31" stroke-width="1" />
<circle cx="1280.1" cy="996.5" r="2.9" stroke-opacity="0.25" stroke-width="1" />
<circle cx="1859.4" cy="781.6" r="5.5" stroke-opacity="0.16" stroke-width="1" />
<path d="M1290 994H1341" stroke-opacity="0.28" stroke-width="1" />
<circle cx="1508.7" cy="547.5" r="2.8" stroke-opacity="0.27" stroke-width="1" />
<path d="M1180 924V990" stroke-opacity="0.23" stroke-width="1" />
<path d="M1184 188V240" stroke-opacity="0.23" stroke-width="1" />
<path d="M1179 122H1285" stroke-opacity="0.31" stroke-width="1" />
<path d="M1205 426L1314 463" stroke-opacity="0.23" stroke-width="1" />
<path d="M1464 876V890" stroke-opacity="0.23" stroke-width="1" />
<path d="M1554 521V612" stroke-opacity="0.26" stroke-width="1" />
<circle cx="1680.6" cy="226.8" r="7.0" stroke-opacity="0.18" stroke-width="1" />
<path d="M1506 990H1593" stroke-opacity="0.21" stroke-width="1" />
<path d="M1903 556V590" stroke-opacity="0.17" stroke-width="1" />
<path d="M1434 869V882" stroke-opacity="0.17" stroke-width="1" />
<path d="M1155 715H1179" stroke-opacity="0.22" stroke-width="1" />
<path d="M1292 729H1384" stroke-opacity="0.15" stroke-width="1" />
<path d="M1372 914V941" stroke-opacity="0.14" stroke-width="1" />
<path d="M1917 304H1977" stroke-opacity="0.30" stroke-width="1" />
<path d="M1484 145V259" stroke-opacity="0.15" stroke-width="1" />
<circle cx="1335.8" cy="840.9" r="4.4" stroke-opacity="0.28" stroke-width="1" />
<path d="M1794 50H1876" stroke-opacity="0.29" stroke-width="1" />
<path d="M1162 714H1185" stroke-opacity="0.18" stroke-width="1" />
<path d="M1674 584V595" stroke-opacity="0.18" stroke-width="1" />
<path d="M1183 527H1211" stroke-opacity="0.32" stroke-width="1" />
<path d="M1562 371H1608" stroke-opacity="0.30" stroke-width="1" />
<path d="M1626 910L1694 927" stroke-opacity="0.25" stroke-width="1" />
<path d="M1282 711L1259 741" stroke-opacity="0.25" stroke-width="1" />
<circle cx="1375.1" cy="608.3" r="5.9" stroke-opacity="0.23" stroke-width="1" />
<circle cx="1447.5" cy="350.0" r="3.1" stroke-opacity="0.23" stroke-width="1" />
<path d="M1508 796V873" stroke-opacity="0.12" stroke-width="1" />
<path d="M1602 42V148" stroke-opacity="0.24" stroke-width="1" />
<path d="M1752 892L1710 986" stroke-opacity="0.21" stroke-width="1" />
<path d="M1209 82H1220" stroke-opacity="0.27" stroke-width="1" />
<path d="M1492 654H1599" stroke-opacity="0.29" stroke-width="1" />
<path d="M1589 231H1609" stroke-opacity="0.27" stroke-width="1" />
<path d="M1607 359L1626 392" stroke-opacity="0.23" stroke-width="1" />
<path d="M1219 692H1301" stroke-opacity="0.17" stroke-width="1" />
<path d="M1669 672H1762" stroke-opacity="0.27" stroke-width="1" />
<path d="M1913 977V1050" stroke-opacity="0.31" stroke-width="1" />
<path d="M1584 342H1691" stroke-opacity="0.22" stroke-width="1" />
<path d="M1308 425V511" stroke-opacity="0.22" stroke-width="1" />
<path d="M1454 746H1558" stroke-opacity="0.23" stroke-width="1" />
<path d="M1158 31H1271" stroke-opacity="0.20" stroke-width="1" />
<path d="M1286 925V996" stroke-opacity="0.13" stroke-width="1" />
<path d="M1684 114H1755" stroke-opacity="0.28" stroke-width="1" />
<path d="M1815 878H1898" stroke-opacity="0.14" stroke-width="1" />
<path d="M1819 747V855" stroke-opacity="0.28" stroke-width="1" />
<path d="M1501 404V432" stroke-opacity="0.12" stroke-width="1" />
<path d="M1603 106H1689" stroke-opacity="0.12" stroke-width="1" />
<path d="M1343 646V708" stroke-opacity="0.28" stroke-width="1" />
<path d="M1380 786H1492" stroke-opacity="0.32" stroke-width="1" />
<circle cx="1643.3" cy="110.4" r="6.8" stroke-opacity="0.21" stroke-width="1" />
<path d="M1486 714H1551" stroke-opacity="0.31" stroke-width="1" />
<path d="M1655 634V688" stroke-opacity="0.21" stroke-width="1" />
<path d="M1804 103H1890" stroke-opacity="0.29" stroke-width="1" />
<circle cx="1709.3" cy="934.6" r="3.7" stroke-opacity="0.14" stroke-width="1" />
<path d="M1162 825V906" stroke-opacity="0.26" stroke-width="1" />
<path d="M1318 364V373" stroke-opacity="0.14" stroke-width="1" />
<path d="M1620 498V593" stroke-opacity="0.23" stroke-width="1" />
<path d="M1902 854V966" stroke-opacity="0.17" stroke-width="1" />
<path d="M1158 611H1225" stroke-opacity="0.19" stroke-width="1" />
<circle cx="1385.9" cy="1021.3" r="6.5" stroke-opacity="0.27" stroke-width="1" />
<circle cx="1534.4" cy="810.8" r="6.0" stroke-opacity="0.30" stroke-width="1" />
<path d="M1915 23H2015" stroke-opacity="0.23" stroke-width="1" />
<path d="M1288 844H1379" stroke-opacity="0.21" stroke-width="1" />
<circle cx="1578.8" cy="850.7" r="2.8" stroke-opacity="0.29" stroke-width="1" />
<circle cx="1535.0" cy="444.5" r="2.6" stroke-opacity="0.19" stroke-width="1" />
<path d="M1378 675H1394" stroke-opacity="0.23" stroke-width="1" />
<path d="M1424 874H1511" stroke-opacity="0.14" stroke-width="1" />
<path d="M1762 346V434" stroke-opacity="0.28" stroke-width="1" />
<path d="M1437 244H1457" stroke-opacity="0.15" stroke-width="1" />
<path d="M1220 726H1258" stroke-opacity="0.29" stroke-width="1" />
<path d="M1417 556H1526" stroke-opacity="0.16" stroke-width="1" />
<path d="M1821 690L1848 700" stroke-opacity="0.31" stroke-width="1" />
<path d="M1268 462H1366" stroke-opacity="0.12" stroke-width="1" />
<path d="M1694 682L1676 697" stroke-opacity="0.22" stroke-width="1" />
<path d="M1524 437H1541" stroke-opacity="0.31" stroke-width="1" />
<path d="M1605 257H1702" stroke-opacity="0.29" stroke-width="1" />
<path d="M1666 623V731" stroke-opacity="0.17" stroke-width="1" />
<path d="M1588 461H1702" stroke-opacity="0.13" stroke-width="1" />
<path d="M1454 61V149" stroke-opacity="0.18" stroke-width="1" />
<path d="M1234 579V664" stroke-opacity="0.23" stroke-width="1" />
<path d="M1285 839H1306" stroke-opacity="0.21" stroke-width="1" />
<path d="M1471 910V1006" stroke-opacity="0.18" stroke-width="1" />
<path d="M1596 748H1682" stroke-opacity="0.14" stroke-width="1" />
<path d="M1430 887V944" stroke-opacity="0.13" stroke-width="1" />
<path d="M1306 256V341" stroke-opacity="0.18" stroke-width="1" />
<path d="M1184 486V577" stroke-opacity="0.31" stroke-width="1" />
<path d="M1613 66H1652" stroke-opacity="0.31" stroke-width="1" />
<path d="M1444 341V444" stroke-opacity="0.20" stroke-width="1" />
<path d="M1821 769V867" stroke-opacity="0.25" stroke-width="1" />
<path d="M1616 26H1719" stroke-opacity="0.18" stroke-width="1" />
<circle cx="1796.9" cy="565.5" r="4.2" stroke-opacity="0.12" stroke-width="1" />
<path d="M1333 766H1358" stroke-opacity="0.32" stroke-width="1" />
<path d="M1398 411H1449" stroke-opacity="0.27" stroke-width="1" />
<circle cx="1171.9" cy="622.3" r="3.7" stroke-opacity="0.18" stroke-width="1" />
<path d="M1489 211V222" stroke-opacity="0.20" stroke-width="1" />
<path d="M1425 377H1531" stroke-opacity="0.28" stroke-width="1" />
<path d="M1556 615V681" stroke-opacity="0.16" stroke-width="1" />
<circle cx="1460.0" cy="776.9" r="5.1" stroke-opacity="0.14" stroke-width="1" />
<path d="M1776 650H1826" stroke-opacity="0.32" stroke-width="1" />
<circle cx="1641.4" cy="398.3" r="2.5" stroke-opacity="0.26" stroke-width="1" />
<path d="M1491 867L1428 906" stroke-opacity="0.32" stroke-width="1" />
<path d="M1592 525V558" stroke-opacity="0.23" stroke-width="1" />
<path d="M1617 590V647" stroke-opacity="0.15" stroke-width="1" />
<circle cx="1693.8" cy="100.5" r="2.1" stroke-opacity="0.26" stroke-width="1" />
<path d="M1858 376H1901" stroke-opacity="0.23" stroke-width="1" />
<path d="M1747 940V956" stroke-opacity="0.24" stroke-width="1" />
<path d="M1565 73V110" stroke-opacity="0.28" stroke-width="1" />
<path d="M1457 32V130" stroke-opacity="0.19" stroke-width="1" />
<path d="M1153 781H1219" stroke-opacity="0.16" stroke-width="1" />
<path d="M1237 96V165" stroke-opacity="0.19" stroke-width="1" />
<path d="M1717 910L1695 913" stroke-opacity="0.31" stroke-width="1" />
<circle cx="1695.5" cy="2.8" r="4.2" stroke-opacity="0.14" stroke-width="1" />
<path d="M1755 183H1807" stroke-opacity="0.20" stroke-width="1" />
<path d="M1913 747H1994" stroke-opacity="0.30" stroke-width="1" />
<path d="M1661 775H1741" stroke-opacity="0.17" stroke-width="1" />
<path d="M1779 256H1796" stroke-opacity="0.32" stroke-width="1" />
<path d="M1224 168H1305" stroke-opacity="0.13" stroke-width="1" />
<path d="M1382 106L1419 145" stroke-opacity="0.15" stroke-width="1" />
<path d="M1277 697V751" stroke-opacity="0.27" stroke-width="1" />
<path d="M1337 770H1365" stroke-opacity="0.29" stroke-width="1" />
<path d="M1584 215H1667" stroke-opacity="0.30" stroke-width="1" />
<path d="M1534 555V604" stroke-opacity="0.14" stroke-width="1" />
<path d="M1531 41H1573" stroke-opacity="0.13" stroke-width="1" />
<path d="M1892 855V971" stroke-opacity="0.13" stroke-width="1" />
<path d="M1641 354V385" stroke-opacity="0.17" stroke-width="1" />
<path d="M1192 585H1206" stroke-opacity="0.31" stroke-width="1" />
<circle cx="1793.1" cy="865.1" r="5.0" stroke-opacity="0.30" stroke-width="1" />
<path d="M1793 691V781" stroke-opacity="0.30" stroke-width="1" />
<path d="M1535 635V701" stroke-opacity="0.23" stroke-width="1" />
<path d="M1707 574H1738" stroke-opacity="0.15" stroke-width="1" />
<path d="M1594 631H1671" stroke-opacity="0.15" stroke-width="1" />
<circle cx="1238.3" cy="680.5" r="5.9" stroke-opacity="0.28" stroke-width="1" />
<path d="M1585 219V333" stroke-opacity="0.17" stroke-width="1" />
<path d="M1885 625V676" stroke-opacity="0.16" stroke-width="1" />
<path d="M1303 83H1369" stroke-opacity="0.27" stroke-width="1" />
<circle cx="1158.6" cy="1007.7" r="5.4" stroke-opacity="0.12" stroke-width="1" />
<path d="M1329 666H1398" stroke-opacity="0.30" stroke-width="1" />
<path d="M1803 500H1826" stroke-opacity="0.18" stroke-width="1" />
<path d="M1871 234V320" stroke-opacity="0.20" stroke-width="1" />
<path d="M1173 109H1229" stroke-opacity="0.27" stroke-width="1" />
<path d="M1254 306V386" stroke-opacity="0.23" stroke-width="1" />
<path d="M1679 94L1617 100" stroke-opacity="0.13" stroke-width="1" />
<path d="M1284 939V967" stroke-opacity="0.25" stroke-width="1" />
<path d="M1232 802H1281" stroke-opacity="0.13" stroke-width="1" />
<path d="M1485 634V667" stroke-opacity="0.23" stroke-width="1" />
<path d="M1343 965V1063" stroke-opacity="0.27" stroke-width="1" />
<path d="M1370 178H1391" stroke-opacity="0.17" stroke-width="1" />
<path d="M1865 883H1970" stroke-opacity="0.26" stroke-width="1" />
<path d="M1757 75H1785" stroke-opacity="0.22" stroke-width="1" />
<circle cx="1916.0" cy="122.6" r="3.7" stroke-opacity="0.24" stroke-width="1" />
<path d="M1190 972H1220" stroke-opacity="0.25" stroke-width="1" />
<path d="M1725 242V334" stroke-opacity="0.13" stroke-width="1" />
<path d="M1621 462H1719" stroke-opacity="0.14" stroke-width="1" />
<path d="M1155 105V148" stroke-opacity="0.20" stroke-width="1" />
<path d="M1589 386V404" stroke-opacity="0.30" stroke-width="1" />
<path d="M1616 403V499" stroke-opacity="0.30" stroke-width="1" />
<path d="M1388 396H1468" stroke-opacity="0.23" stroke-width="1" />
<path d="M1645 314H1668" stroke-opacity="0.26" stroke-width="1" />
<circle cx="1327.8" cy="443.0" r="3.3" stroke-opacity="0.26" stroke-width="1" />
<path d="M1868 102H1952" stroke-opacity="0.20" stroke-width="1" />
<path d="M1532 952V1053" stroke-opacity="0.28" stroke-width="1" />
<circle cx="1837.7" cy="328.0" r="2.2" stroke-opacity="0.30" stroke-width="1" />
<path d="M1846 496V554" stroke-opacity="0.19" stroke-width="1" />
<path d="M1263 454H1360" stroke-opacity="0.28" stroke-width="1" />
<path d="M1310 747V830" stroke-opacity="0.13" stroke-width="1" />
<path d="M1261 935H1324" stroke-opacity="0.18" stroke-width="1" />
<path d="M1478 212V281" stroke-opacity="0.15" stroke-width="1" />
<path d="M1155 919V997" stroke-opacity="0.31" stroke-width="1" />
<path d="M1553 454V557" stroke-opacity="0.20" stroke-width="1" />
<path d="M1525 36V62" stroke-opacity="0.15" stroke-width="1" />
<path d="M1183 449H1226" stroke-opacity="0.18" stroke-width="1" />
<path d="M1645 646H1684" stroke-opacity="0.31" stroke-width="1" />
<path d="M1550 658V714" stroke-opacity="0.17" stroke-width="1" />
<path d="M1572 728V738" stroke-opacity="0.26" stroke-width="1" />
<path d="M1826 907V998" stroke-opacity="0.16" stroke-width="1" />
<path d="M1841 974H1905" stroke-opacity="0.24" stroke-width="1" />
<path d="M1735 767H1830" stroke-opacity="0.14" stroke-width="1" />
<path d="M1362 727H1433" stroke-opacity="0.14" stroke-width="1" />
<path d="M1821 339H1923" stroke-opacity="0.23" stroke-width="1" />
<path d="M1544 91V167" stroke-opacity="0.14" stroke-width="1" />
<path d="M1237 193V304" stroke-opacity="0.23" stroke-width="1" />
<path d="M1609 64L1518 121" stroke-opacity="0.15" stroke-width="1" />
<path d="M1394 346V451" stroke-opacity="0.24" stroke-width="1" />
<path d="M1567 947V1039" stroke-opacity="0.12" stroke-width="1" />
<path d="M1695 400V448" stroke-opacity="0.24" stroke-width="1" />
<path d="M1399 263L1420 295" stroke-opacity="0.32" stroke-width="1" />
<path d="M1643 1033V1100" stroke-opacity="0.28" stroke-width="1" />
<path d="M1893 258V306" stroke-opacity="0.16" stroke-width="1" />
<path d="M1521 268V385" stroke-opacity="0.17" stroke-width="1" />
<path d="M1160 770L1195 821" stroke-opacity="0.12" stroke-width="1" />
<path d="M1280 368L1298 412" stroke-opacity="0.23" stroke-width="1" />
<path d="M1201 813V832" stroke-opacity="0.25" stroke-width="1" />
<path d="M1744 84V201" stroke-opacity="0.16" stroke-width="1" />
<path d="M1332 135H1428" stroke-opacity="0.15" stroke-width="1" />
<path d="M1399 719V788" stroke-opacity="0.18" stroke-width="1" />
<path d="M1400 475H1463" stroke-opacity="0.28" stroke-width="1" />
<circle cx="1505.8" cy="578.8" r="6.6" stroke-opacity="0.15" stroke-width="1" />
<path d="M1393 619V664" stroke-opacity="0.27" stroke-width="1" />
<path d="M1578 712V791" stroke-opacity="0.25" stroke-width="1" />
<path d="M1517 454V541" stroke-opacity="0.25" stroke-width="1" />
<circle cx="1400.5" cy="79.4" r="2.7" stroke-opacity="0.18" stroke-width="1" />
<path d="M1191 540H1245" stroke-opacity="0.29" stroke-width="1" />
<path d="M1791 950V1047" stroke-opacity="0.13" stroke-width="1" />
<path d="M1191 873H1216" stroke-opacity="0.14" stroke-width="1" />
<path d="M1888 276L1850 298" stroke-opacity="0.30" stroke-width="1" />
<path d="M1793 757V786" stroke-opacity="0.28" stroke-width="1" />
<path d="M1561 278V343" stroke-opacity="0.29" stroke-width="1" />
<path d="M1545 300V344" stroke-opacity="0.23" stroke-width="1" />
<path d="M1527 539H1630" stroke-opacity="0.21" stroke-width="1" />
<path d="M1536 167H1567" stroke-opacity="0.19" stroke-width="1" />
<path d="M1488 546H1587" stroke-opacity="0.24" stroke-width="1" />
<path d="M1565 97V157" stroke-opacity="0.28" stroke-width="1" />
<path d="M1588 414H1613" stroke-opacity="0.21" stroke-width="1" />
<path d="M1280 568H1315" stroke-opacity="0.29" stroke-width="1" />
<path d="M1298 578V654" stroke-opacity="0.29" stroke-width="1" />
<circle cx="1766.9" cy="733.3" r="4.6" stroke-opacity="0.26" stroke-width="1" />
<path d="M1161 461H1240" stroke-opacity="0.21" stroke-width="1" />
<path d="M1594 928H1639" stroke-opacity="0.31" stroke-width="1" />
<path d="M1195 970V1039" stroke-opacity="0.32" stroke-width="1" />
<path d="M1830 389V479" stroke-opacity="0.30" stroke-width="1" />
<path d="M1476 114H1584" stroke-opacity="0.16" stroke-width="1" />
<path d="M1772 619V670" stroke-opacity="0.25" stroke-width="1" />
<path d="M1781 510H1810" stroke-opacity="0.23" stroke-width="1" />
<path d="M1575 578H1612" stroke-opacity="0.30" stroke-width="1" />
<path d="M1720 1034H1728" stroke-opacity="0.24" stroke-width="1" />
<path d="M1281 801H1355" stroke-opacity="0.28" stroke-width="1" />
<path d="M1160 571V599" stroke-opacity="0.15" stroke-width="1" />
<path d="M1412 145V237" stroke-opacity="0.14" stroke-width="1" />
<path d="M1684 344V424" stroke-opacity="0.25" stroke-width="1" />
<path d="M1638 254V327" stroke-opacity="0.23" stroke-width="1" />
<path d="M1504 479V565" stroke-opacity="0.13" stroke-width="1" />
<path d="M1295 921H1343" stroke-opacity="0.18" stroke-width="1" />
<path d="M1201 63H1245" stroke-opacity="0.27" stroke-width="1" />
<path d="M1533 838V878" stroke-opacity="0.30" stroke-width="1" />
<path d="M1496 961V1042" stroke-opacity="0.13" stroke-width="1" />
<path d="M1843 367H1861" stroke-opacity="0.18" stroke-width="1" />
<path d="M1769 833V855" stroke-opacity="0.22" stroke-width="1" />
<path d="M1653 286H1747" stroke-opacity="0.18" stroke-width="1" />
<path d="M1857 958V978" stroke-opacity="0.16" stroke-width="1" />
<path d="M1472 761V870" stroke-opacity="0.24" stroke-width="1" />
<path d="M1602 611H1708" stroke-opacity="0.31" stroke-width="1" />
<path d="M1434 772V831" stroke-opacity="0.27" stroke-width="1" />
<path d="M1908 682V771" stroke-opacity="0.22" stroke-width="1" />
<path d="M1585 301V415" stroke-opacity="0.30" stroke-width="1" />
<path d="M1611 487H1724" stroke-opacity="0.14" stroke-width="1" />
<path d="M1908 773V849" stroke-opacity="0.17" stroke-width="1" />
<path d="M1273 138V159" stroke-opacity="0.20" stroke-width="1" />
<path d="M1646 724V787" stroke-opacity="0.16" stroke-width="1" />
<path d="M1765 181V198" stroke-opacity="0.27" stroke-width="1" />
<path d="M1493 738H1604" stroke-opacity="0.27" stroke-width="1" />
<path d="M1383 40V76" stroke-opacity="0.26" stroke-width="1" />
<path d="M1842 338H1950" stroke-opacity="0.12" stroke-width="1" />
<circle cx="1713.0" cy="825.1" r="2.1" stroke-opacity="0.28" stroke-width="1" />
<path d="M1693 546V592" stroke-opacity="0.18" stroke-width="1" />
<path d="M1304 420H1398" stroke-opacity="0.26" stroke-width="1" />
<path d="M1431 336H1498" stroke-opacity="0.18" stroke-width="1" />
<path d="M1773 960V1014" stroke-opacity="0.22" stroke-width="1" />
<path d="M1182 365H1242" stroke-opacity="0.24" stroke-width="1" />
<path d="M1499 161V271" stroke-opacity="0.18" stroke-width="1" />
<path d="M1722 139V157" stroke-opacity="0.15" stroke-width="1" />
<path d="M1238 398H1305" stroke-opacity="0.18" stroke-width="1" />
<path d="M1573 361V462" stroke-opacity="0.19" stroke-width="1" />
<path d="M1693 117H1737" stroke-opacity="0.32" stroke-width="1" />
<path d="M1384 866H1453" stroke-opacity="0.31" stroke-width="1" />
<path d="M1660 1015V1072" stroke-opacity="0.26" stroke-width="1" />
<path d="M1261 118H1274" stroke-opacity="0.12" stroke-width="1" />
<circle cx="1894.3" cy="225.9" r="6.0" stroke-opacity="0.25" stroke-width="1" />
<circle cx="1276.7" cy="587.7" r="5.5" stroke-opacity="0.31" stroke-width="1" />
<path d="M1788 50V60" stroke-opacity="0.14" stroke-width="1" />
<path d="M1515 881H1555" stroke-opacity="0.15" stroke-width="1" />
<path d="M1284 870V983" stroke-opacity="0.14" stroke-width="1" />
<path d="M1607 426H1709" stroke-opacity="0.30" stroke-width="1" />
<path d="M1777 114L1799 117" stroke-opacity="0.29" stroke-width="1" />
<path d="M1358 830H1468" stroke-opacity="0.19" stroke-width="1" />
<path d="M1805 563V652" stroke-opacity="0.26" stroke-width="1" />
<path d="M1432 447V464" stroke-opacity="0.28" stroke-width="1" />
<path d="M1559 69H1572" stroke-opacity="0.20" stroke-width="1" />
<path d="M1162 734H1194" stroke-opacity="0.30" stroke-width="1" />
<circle cx="1742.3" cy="172.2" r="4.5" stroke-opacity="0.29" stroke-width="1" />
<path d="M1292 207H1378" stroke-opacity="0.14" stroke-width="1" />
<circle cx="1473.3" cy="372.7" r="3.5" stroke-opacity="0.26" stroke-width="1" />
<path d="M1646 143L1668 166" stroke-opacity="0.18" stroke-width="1" />
<path d="M1650 519H1663" stroke-opacity="0.17" stroke-width="1" />
<path d="M1841 116V161" stroke-opacity="0.30" stroke-width="1" />
<path d="M1481 1024V1036" stroke-opacity="0.19" stroke-width="1" />
<path d="M1216 417V485" stroke-opacity="0.23" stroke-width="1" />
<path d="M1744 894L1677 910" stroke-opacity="0.15" stroke-width="1" />
<path d="M1726 2V72" stroke-opacity="0.13" stroke-width="1" />
<path d="M1606 8L1659 93" stroke-opacity="0.31" stroke-width="1" />
<path d="M1771 477V567" stroke-opacity="0.13" stroke-width="1" />
<path d="M1489 574H1514" stroke-opacity="0.31" stroke-width="1" />
<path d="M1697 404V432" stroke-opacity="0.21" stroke-width="1" />
<path d="M1412 160H1466" stroke-opacity="0.23" stroke-width="1" />
<path d="M1248 604H1329" stroke-opacity="0.30" stroke-width="1" />
<path d="M1163 802V870" stroke-opacity="0.31" stroke-width="1" />
<circle cx="1704.2" cy="958.2" r="3.4" stroke-opacity="0.20" stroke-width="1" />
<circle cx="1396.2" cy="1016.2" r="6.5" stroke-opacity="0.13" stroke-width="1" />
<path d="M1388 844H1471" stroke-opacity="0.14" stroke-width="1" />
<path d="M1258 578H1328" stroke-opacity="0.27" stroke-width="1" />
<path d="M1501 527V562" stroke-opacity="0.13" stroke-width="1" />
<path d="M1304 948V976" stroke-opacity="0.32" stroke-width="1" />
<path d="M1324 1027V1070" stroke-opacity="0.31" stroke-width="1" />
<path d="M1892 105H1924" stroke-opacity="0.14" stroke-width="1" />
<path d="M1352 367H1420" stroke-opacity="0.23" stroke-width="1" />
<path d="M1590 394V447" stroke-opacity="0.20" stroke-width="1" />
<path d="M1589 991H1647" stroke-opacity="0.26" stroke-width="1" />
<path d="M1663 555V599" stroke-opacity="0.16" stroke-width="1" />
<path d="M1652 142H1716" stroke-opacity="0.24" stroke-width="1" />
<path d="M1730 693V772" stroke-opacity="0.22" stroke-width="1" />
<path d="M1565 556H1649" stroke-opacity="0.21" stroke-width="1" />
<path d="M1836 618H1954" stroke-opacity="0.23" stroke-width="1" />
<path d="M1245 31L1200 88" stroke-opacity="0.12" stroke-width="1" />
<path d="M1374 454V464" stroke-opacity="0.21" stroke-width="1" />
<path d="M1535 804H1613" stroke-opacity="0.21" stroke-width="1" />
<path d="M1334 746V779" stroke-opacity="0.27" stroke-width="1" />
<path d="M1194 999V1076" stroke-opacity="0.29" stroke-width="1" />
<path d="M1235 471V565" stroke-opacity="0.20" stroke-width="1" />
<path d="M1236 118V233" stroke-opacity="0.22" stroke-width="1" />
<path d="M1562 659H1617" stroke-opacity="0.20" stroke-width="1" />
<path d="M1542 64H1552" stroke-opacity="0.13" stroke-width="1" />
<path d="M1860 397H1932" stroke-opacity="0.19" stroke-width="1" />
<path d="M1254 210V240" stroke-opacity="0.26" stroke-width="1" />
<path d="M1884 158V243" stroke-opacity="0.18" stroke-width="1" />
<path d="M1501 496V568" stroke-opacity="0.31" stroke-width="1" />
<path d="M1339 1019H1392" stroke-opacity="0.19" stroke-width="1" />
<circle cx="1865.3" cy="1016.2" r="4.7" stroke-opacity="0.32" stroke-width="1" />
<path d="M1738 374V386" stroke-opacity="0.24" stroke-width="1" />
<path d="M1900 561H1916" stroke-opacity="0.25" stroke-width="1" />
<path d="M1320 657H1397" stroke-opacity="0.28" stroke-width="1" />
<circle cx="1468.4" cy="606.2" r="2.8" stroke-opacity="0.30" stroke-width="1" />
<path d="M1694 204V309" stroke-opacity="0.26" stroke-width="1" />
<path d="M1599 443V469" stroke-opacity="0.30" stroke-width="1" />
<path d="M1803 16H1871" stroke-opacity="0.19" stroke-width="1" />
<path d="M1188 63H1207" stroke-opacity="0.21" stroke-width="1" />
<path d="M1480 442H1504" stroke-opacity="0.28" stroke-width="1" />
<circle cx="1240.9" cy="607.8" r="5.3" stroke-opacity="0.27" stroke-width="1" />
<path d="M1690 306H1736" stroke-opacity="0.16" stroke-width="1" />
<path d="M1628 525H1704" stroke-opacity="0.17" stroke-width="1" />
<path d="M1642 273V312" stroke-opacity="0.30" stroke-width="1" />
<path d="M1524 1007V1071" stroke-opacity="0.30" stroke-width="1" />
<path d="M1796 370V383" stroke-opacity="0.13" stroke-width="1" />
<path d="M1340 773H1414" stroke-opacity="0.21" stroke-width="1" />
<path d="M1220 653V705" stroke-opacity="0.23" stroke-width="1" />
<circle cx="1187.9" cy="517.1" r="4.9" stroke-opacity="0.16" stroke-width="1" />
<path d="M1203 77H1222" stroke-opacity="0.20" stroke-width="1" />
<path d="M1227 210V249" stroke-opacity="0.17" stroke-width="1" />
<path d="M1189 727V807" stroke-opacity="0.22" stroke-width="1" />
<path d="M1642 518L1753 526" stroke-opacity="0.27" stroke-width="1" />
<path d="M1885 74L1950 99" stroke-opacity="0.32" stroke-width="1" />
<path d="M1538 800H1632" stroke-opacity="0.20" stroke-width="1" />
<path d="M1851 1032V1074" stroke-opacity="0.14" stroke-width="1" />
<path d="M1760 713H1815" stroke-opacity="0.23" stroke-width="1" />
<path d="M1886 314V394" stroke-opacity="0.31" stroke-width="1" />
<circle cx="1253.6" cy="815.3" r="5.6" stroke-opacity="0.30" stroke-width="1" />
<circle cx="1413.6" cy="847.2" r="2.9" stroke-opacity="0.25" stroke-width="1" />
<path d="M1916 90V181" stroke-opacity="0.25" stroke-width="1" />
<path d="M1787 519L1713 582" stroke-opacity="0.29" stroke-width="1" />
<path d="M1470 574H1540" stroke-opacity="0.27" stroke-width="1" />
<path d="M1699 176H1779" stroke-opacity="0.32" stroke-width="1" />
<path d="M1426 632H1537" stroke-opacity="0.30" stroke-width="1" />
<path d="M1830 45H1912" stroke-opacity="0.31" stroke-width="1" />
<path d="M1905 555H1939" stroke-opacity="0.18" stroke-width="1" />
<path d="M1174 927L1189 957" stroke-opacity="0.24" stroke-width="1" />
<path d="M1579 315V367" stroke-opacity="0.17" stroke-width="1" />
<path d="M1311 240H1344" stroke-opacity="0.32" stroke-width="1" />
<path d="M1392 432V494" stroke-opacity="0.24" stroke-width="1" />
<path d="M1154 268V337" stroke-opacity="0.25" stroke-width="1" />
<path d="M1754 426H1839" stroke-opacity="0.30" stroke-width="1" />
<path d="M1885 525H1974" stroke-opacity="0.20" stroke-width="1" />
<path d="M1458 1018H1529" stroke-opacity="0.31" stroke-width="1" />
<path d="M1252 360H1273" stroke-opacity="0.23" stroke-width="1" />
<circle cx="1608.7" cy="35.3" r="4.2" stroke-opacity="0.16" stroke-width="1" />
<path d="M1280 604H1322" stroke-opacity="0.20" stroke-width="1" />
<path d="M1168 902H1229" stroke-opacity="0.16" stroke-width="1" />
<path d="M1448 170H1498" stroke-opacity="0.19" stroke-width="1" />
<path d="M1718 120H1797" stroke-opacity="0.29" stroke-width="1" />
<path d="M1420 681L1445 682" stroke-opacity="0.27" stroke-width="1" />
<path d="M1711 157V193" stroke-opacity="0.31" stroke-width="1" />
<path d="M1242 793V827" stroke-opacity="0.16" stroke-width="1" />
<path d="M1657 336V347" stroke-opacity="0.20" stroke-width="1" />
<path d="M1470 803H1563" stroke-opacity="0.29" stroke-width="1" />
<circle cx="1425.3" cy="12.0" r="2.4" stroke-opacity="0.29" stroke-width="1" />
<path d="M1165 804V857" stroke-opacity="0.25" stroke-width="1" />
<path d="M1258 855H1373" stroke-opacity="0.18" stroke-width="1" />
<path d="M1447 242V270" stroke-opacity="0.19" stroke-width="1" />
<path d="M1301 852H1402" stroke-opacity="0.18" stroke-width="1" />
<path d="M1305 20L1351 49" stroke-opacity="0.30" stroke-width="1" />
<path d="M1716 336H1733" stroke-opacity="0.16" stroke-width="1" />
<circle cx="1476.8" cy="395.7" r="4.0" stroke-opacity="0.25" stroke-width="1" />
<path d="M1206 330L1244 333" stroke-opacity="0.29" stroke-width="1" />
<path d="M1565 957H1646" stroke-opacity="0.21" stroke-width="1" />
<path d="M1187 325V344" stroke-opacity="0.31" stroke-width="1" />
<path d="M1152 316V428" stroke-opacity="0.16" stroke-width="1" />
<path d="M1428 765V813" stroke-opacity="0.20" stroke-width="1" />
<circle cx="1895.0" cy="666.9" r="4.5" stroke-opacity="0.15" stroke-width="1" />
<circle cx="1334.4" cy="376.6" r="6.7" stroke-opacity="0.23" stroke-width="1" />
<path d="M1608 982H1640" stroke-opacity="0.31" stroke-width="1" />
<path d="M1253 81H1296" stroke-opacity="0.26" stroke-width="1" />
<path d="M1836 165H1905" stroke-opacity="0.28" stroke-width="1" />
<circle cx="1335.5" cy="114.3" r="6.0" stroke-opacity="0.13" stroke-width="1" />
<path d="M1639 98V182" stroke-opacity="0.30" stroke-width="1" />
<path d="M1327 511H1377" stroke-opacity="0.23" stroke-width="1" />
<path d="M1755 257H1791" stroke-opacity="0.29" stroke-width="1" />
<circle cx="1477.9" cy="787.1" r="3.2" stroke-opacity="0.22" stroke-width="1" />
<path d="M1510 215V296" stroke-opacity="0.14" stroke-width="1" />
<path d="M1420 926H1441" stroke-opacity="0.19" stroke-width="1" />
<path d="M1554 1022H1634" stroke-opacity="0.26" stroke-width="1" />
<path d="M1873 217V261" stroke-opacity="0.24" stroke-width="1" />
<path d="M1195 1021H1298" stroke-opacity="0.24" stroke-width="1" />
<path d="M1860 286H1962" stroke-opacity="0.19" stroke-width="1" />
<path d="M1797 244H1817" stroke-opacity="0.19" stroke-width="1" />
<path d="M1813 28V94" stroke-opacity="0.31" stroke-width="1" />
<path d="M1504 936V951" stroke-opacity="0.20" stroke-width="1" />
<path d="M1200 295V317" stroke-opacity="0.14" stroke-width="1" />
<path d="M1573 302H1605" stroke-opacity="0.19" stroke-width="1" />
<path d="M1839 141V167" stroke-opacity="0.25" stroke-width="1" />
<path d="M1612 866V949" stroke-opacity="0.13" stroke-width="1" />
<circle cx="1163.2" cy="248.0" r="3.1" stroke-opacity="0.24" stroke-width="1" />
<path d="M1298 889V992" stroke-opacity="0.15" stroke-width="1" />
<path d="M1653 885H1718" stroke-opacity="0.14" stroke-width="1" />
<path d="M1846 940V1030" stroke-opacity="0.27" stroke-width="1" />
<circle cx="1610.8" cy="480.3" r="6.1" stroke-opacity="0.20" stroke-width="1" />
<path d="M1155 221V307" stroke-opacity="0.30" stroke-width="1" />
<path d="M1854 631H1944" stroke-opacity="0.23" stroke-width="1" />
<path d="M1528 798H1539" stroke-opacity="0.16" stroke-width="1" />
<path d="M1662 565H1717" stroke-opacity="0.22" stroke-width="1" />
<path d="M1745 951H1808" stroke-opacity="0.27" stroke-width="1" />
<path d="M1801 360H1907" stroke-opacity="0.19" stroke-width="1" />
<path d="M1916 380H2118" stroke-opacity="0.30" stroke-width="1" stroke-dasharray="5 3"/>
<path d="M1617 232V483" stroke-opacity="0.30" stroke-width="1" stroke-dasharray="5 3"/>
<path d="M1675 290H1912" stroke-opacity="0.30" stroke-width="1" stroke-dasharray="5 3"/>
<path d="M1563 994V1095" stroke-opacity="0.30" stroke-width="1" stroke-dasharray="5 3"/>
<path d="M1646 103V316" stroke-opacity="0.30" stroke-width="1" stroke-dasharray="5 3"/>
<path d="M1393 879V1119" stroke-opacity="0.30" stroke-width="1" stroke-dasharray="5 3"/>
<path d="M1558 994H1798" stroke-opacity="0.30" stroke-width="1" stroke-dasharray="5 3"/>
<path d="M1296 351H1366" stroke-opacity="0.30" stroke-width="1" stroke-dasharray="5 3"/>
<path d="M1476 997H1634" stroke-opacity="0.30" stroke-width="1" stroke-dasharray="5 3"/>
<path d="M1564 405V574" stroke-opacity="0.30" stroke-width="1" stroke-dasharray="5 3"/>
<path d="M1653 811V893" stroke-opacity="0.30" stroke-width="1" stroke-dasharray="5 3"/>
<path d="M1162 172H1336" stroke-opacity="0.30" stroke-width="1" stroke-dasharray="5 3"/>
<path d="M1601 365V539" stroke-opacity="0.30" stroke-width="1" stroke-dasharray="5 3"/>
<path d="M1259 75V278" stroke-opacity="0.30" stroke-width="1" stroke-dasharray="5 3"/>
<path d="M1251 0H1342" stroke-opacity="0.30" stroke-width="1" stroke-dasharray="5 3"/>
<path d="M1511 113V325" stroke-opacity="0.30" stroke-width="1" stroke-dasharray="5 3"/>
<path d="M1731 98H1863" stroke-opacity="0.30" stroke-width="1" stroke-dasharray="5 3"/>
<path d="M1652 672H1810" stroke-opacity="0.30" stroke-width="1" stroke-dasharray="5 3"/>
<path d="M1296 522H1359" stroke-opacity="0.30" stroke-width="1" stroke-dasharray="5 3"/>
<path d="M1532 97V172" stroke-opacity="0.30" stroke-width="1" stroke-dasharray="5 3"/>
<path d="M1159 472H1395" stroke-opacity="0.30" stroke-width="1" stroke-dasharray="5 3"/>
<path d="M1392 656H1511" stroke-opacity="0.30" stroke-width="1" stroke-dasharray="5 3"/>
<path d="M1586 115V226" stroke-opacity="0.30" stroke-width="1" stroke-dasharray="5 3"/>
<path d="M1454 436H1701" stroke-opacity="0.30" stroke-width="1" stroke-dasharray="5 3"/>
<path d="M1736 621V750" stroke-opacity="0.30" stroke-width="1" stroke-dasharray="5 3"/>
<path d="M1817 569H1893" stroke-opacity="0.30" stroke-width="1" stroke-dasharray="5 3"/>
<path d="M1384 164H1538" stroke-opacity="0.30" stroke-width="1" stroke-dasharray="5 3"/>
<path d="M1720 814V1040" stroke-opacity="0.30" stroke-width="1" stroke-dasharray="5 3"/>
<path d="M1825 953V1120" stroke-opacity="0.30" stroke-width="1" stroke-dasharray="5 3"/>
<path d="M1245 902H1310" stroke-opacity="0.30" stroke-width="1" stroke-dasharray="5 3"/>
<path d="M1412 114V267" stroke-opacity="0.30" stroke-width="1" stroke-dasharray="5 3"/>
<path d="M1365 644V887" stroke-opacity="0.30" stroke-width="1" stroke-dasharray="5 3"/>
<path d="M1369 576V684" stroke-opacity="0.30" stroke-width="1" stroke-dasharray="5 3"/>
<path d="M1469 452V689" stroke-opacity="0.30" stroke-width="1" stroke-dasharray="5 3"/>
<path d="M1310 132V290" stroke-opacity="0.30" stroke-width="1" stroke-dasharray="5 3"/>
<path d="M1182 428V525" stroke-opacity="0.30" stroke-width="1" stroke-dasharray="5 3"/>
<path d="M1595 864V1085" stroke-opacity="0.30" stroke-width="1" stroke-dasharray="5 3"/>
<path d="M1456 367H1559" stroke-opacity="0.30" stroke-width="1" stroke-dasharray="5 3"/>
<path d="M1598 329V492" stroke-opacity="0.30" stroke-width="1" stroke-dasharray="5 3"/>
<path d="M1543 114V185" stroke-opacity="0.30" stroke-width="1" stroke-dasharray="5 3"/>
<path d="M1775 496V746" stroke-opacity="0.30" stroke-width="1" stroke-dasharray="5 3"/>
<path d="M1623 715H1837" stroke-opacity="0.30" stroke-width="1" stroke-dasharray="5 3"/>
<path d="M1714 78H1824" stroke-opacity="0.30" stroke-width="1" stroke-dasharray="5 3"/>
<path d="M1474 987V1135" stroke-opacity="0.30" stroke-width="1" stroke-dasharray="5 3"/>
<path d="M1314 112H1498" stroke-opacity="0.30" stroke-width="1" stroke-dasharray="5 3"/>
<path d="M1378 603V777" stroke-opacity="0.30" stroke-width="1" stroke-dasharray="5 3"/>
<path d="M1210 703H1418" stroke-opacity="0.30" stroke-width="1" stroke-dasharray="5 3"/>
<path d="M1677 768H1797" stroke-opacity="0.30" stroke-width="1" stroke-dasharray="5 3"/>
<path d="M1465 196H1539" stroke-opacity="0.30" stroke-width="1" stroke-dasharray="5 3"/>
<path d="M1700 811H1818" stroke-opacity="0.30" stroke-width="1" stroke-dasharray="5 3"/>
<path d="M1465 195V322" stroke-opacity="0.30" stroke-width="1" stroke-dasharray="5 3"/>
<path d="M1771 856V971" stroke-opacity="0.30" stroke-width="1" stroke-dasharray="5 3"/>
<path d="M1436 496H1555" stroke-opacity="0.30" stroke-width="1" stroke-dasharray="5 3"/>
<path d="M1661 214V369" stroke-opacity="0.30" stroke-width="1" stroke-dasharray="5 3"/>
<path d="M1468 685V786" stroke-opacity="0.30" stroke-width="1" stroke-dasharray="5 3"/>
<path d="M1838 820V953" stroke-opacity="0.30" stroke-width="1" stroke-dasharray="5 3"/>
<path d="M1580 1021V1256" stroke-opacity="0.30" stroke-width="1" stroke-dasharray="5 3"/>
<path d="M1826 424V680" stroke-opacity="0.30" stroke-width="1" stroke-dasharray="5 3"/>
<path d="M1768 1021H1983" stroke-opacity="0.30" stroke-width="1" stroke-dasharray="5 3"/>
<path d="M1694 215V353" stroke-opacity="0.30" stroke-width="1" stroke-dasharray="5 3"/>
<circle cx="1692.0" cy="-40.0" r="120.0" stroke-opacity="0.65" stroke-width="1" />
<circle cx="1692.0" cy="-40.0" r="127.0" stroke-opacity="0.65" stroke-width="1" />
<circle cx="1692.0" cy="-40.0" r="134.0" stroke-opacity="0.65" stroke-width="1" />
<circle cx="1692.0" cy="-40.0" r="141.0" stroke-opacity="0.65" stroke-width="1" />
<circle cx="1692.0" cy="-40.0" r="148.0" stroke-opacity="0.65" stroke-width="1" />
<circle cx="1692.0" cy="-40.0" r="155.0" stroke-opacity="0.65" stroke-width="1" />
<circle cx="1692.0" cy="-40.0" r="162.0" stroke-opacity="0.65" stroke-width="1" />
<circle cx="1692.0" cy="-40.0" r="169.0" stroke-opacity="0.65" stroke-width="1" />
<circle cx="1692.0" cy="-40.0" r="176.0" stroke-opacity="0.65" stroke-width="1" />
<circle cx="1692.0" cy="-40.0" r="205.0" stroke-opacity="0.50" stroke-width="1" />
<circle cx="1692.0" cy="-40.0" r="215.0" stroke-opacity="0.50" stroke-width="1" />
<circle cx="1692.0" cy="-40.0" r="240.0" stroke-opacity="0.50" stroke-width="1" />
<circle cx="1692.0" cy="-40.0" r="262.0" stroke-opacity="0.50" stroke-width="1" />
<circle cx="1692.0" cy="-40.0" r="285.0" stroke-opacity="0.50" stroke-width="1" />
<circle cx="1692.0" cy="-40.0" r="310.0" stroke-opacity="0.50" stroke-width="1" />
<circle cx="1692.0" cy="-40.0" r="360.0" stroke-opacity="0.30" stroke-width="1" />
<circle cx="1692.0" cy="-40.0" r="420.0" stroke-opacity="0.30" stroke-width="1" />
<circle cx="1692.0" cy="-40.0" r="480.0" stroke-opacity="0.30" stroke-width="1" />
<path d="M1365 6L1256 21" stroke-opacity="0.30" stroke-width="1" />
<path d="M1367 17L1259 36" stroke-opacity="0.30" stroke-width="1" />
<path d="M1369 27L1261 50" stroke-opacity="0.30" stroke-width="1" />
<path d="M1371 38L1265 64" stroke-opacity="0.30" stroke-width="1" />
<path d="M1374 49L1268 78" stroke-opacity="0.30" stroke-width="1" />
<path d="M1377 59L1272 92" stroke-opacity="0.30" stroke-width="1" />
<path d="M1381 70L1277 106" stroke-opacity="0.30" stroke-width="1" />
<path d="M1385 80L1282 120" stroke-opacity="0.30" stroke-width="1" />
<path d="M1389 90L1288 133" stroke-opacity="0.30" stroke-width="1" />
<path d="M1393 100L1294 147" stroke-opacity="0.30" stroke-width="1" />
<path d="M1398 110L1300 160" stroke-opacity="0.30" stroke-width="1" />
<path d="M1403 119L1307 173" stroke-opacity="0.30" stroke-width="1" />
<path d="M1409 129L1314 185" stroke-opacity="0.30" stroke-width="1" />
<path d="M1414 138L1322 198" stroke-opacity="0.30" stroke-width="1" />
<path d="M1420 147L1330 210" stroke-opacity="0.30" stroke-width="1" />
<path d="M1427 156L1338 222" stroke-opacity="0.30" stroke-width="1" />
<path d="M1433 165L1347 233" stroke-opacity="0.30" stroke-width="1" />
<path d="M1440 173L1356 245" stroke-opacity="0.30" stroke-width="1" />
<path d="M1448 182L1366 256" stroke-opacity="0.30" stroke-width="1" />
<path d="M1455 190L1376 266" stroke-opacity="0.30" stroke-width="1" />
<path d="M1463 197L1386 277" stroke-opacity="0.30" stroke-width="1" />
<path d="M1471 205L1397 286" stroke-opacity="0.30" stroke-width="1" />
<path d="M1479 212L1408 296" stroke-opacity="0.30" stroke-width="1" />
<path d="M1487 219L1419 305" stroke-opacity="0.30" stroke-width="1" />
<path d="M1496 226L1431 314" stroke-opacity="0.30" stroke-width="1" />
<path d="M1505 232L1443 323" stroke-opacity="0.30" stroke-width="1" />
<path d="M1514 238L1455 331" stroke-opacity="0.30" stroke-width="1" />
<path d="M1524 244L1467 338" stroke-opacity="0.30" stroke-width="1" />
<path d="M1533 249L1480 346" stroke-opacity="0.30" stroke-width="1" />
<path d="M1543 254L1493 352" stroke-opacity="0.30" stroke-width="1" />
<path d="M1664 0L1692 22L1720 0" stroke-opacity="0.90" stroke-width="1.2" />
<path d="M1632 34H1886" stroke-opacity="0.70" stroke-width="1.5" />
<path d="M1687 34V1036" stroke-opacity="0.70" stroke-width="1.2" />
<path d="M1692 34V1036" stroke-opacity="0.55" stroke-width="1" />
<circle cx="1716.0" cy="532.0" r="75.0" stroke-opacity="0.75" stroke-width="2.5" />
<circle cx="1716.0" cy="532.0" r="64.0" stroke-opacity="0.40" stroke-width="1" stroke-dasharray="6 4"/>
<path d="M1640 215A519 519 0 0 1 1869 680" stroke-opacity="0.60" stroke-width="2" />
<path d="M1869 680A519 519 0 0 1 1810 890" stroke-opacity="0.35" stroke-width="1.3" />
<circle cx="2050.0" cy="700.0" r="420.0" stroke-opacity="0.30" stroke-width="1.2" />
<circle cx="1730.0" cy="1010.0" r="105.0" stroke-opacity="0.20" stroke-width="1" />
<path d="M1768 205L1850 296L1918 330" stroke-opacity="0.55" stroke-width="1.5" />
<path d="M1460 687H1918" stroke-opacity="0.70" stroke-width="2" />
<path d="M1460 792H1918" stroke-opacity="0.55" stroke-width="1.5" />
<path d="M1490 955H1918" stroke-opacity="0.70" stroke-width="1.8" />
<path d="M1490 944H1918" stroke-opacity="0.40" stroke-width="1" />
<circle cx="1511.0" cy="964.0" r="6.0" stroke-opacity="0.70" stroke-width="1.2" />
<circle cx="1614.0" cy="964.0" r="6.0" stroke-opacity="0.70" stroke-width="1.2" />
<circle cx="1716.0" cy="964.0" r="6.0" stroke-opacity="0.70" stroke-width="1.2" />
<circle cx="1818.0" cy="964.0" r="6.0" stroke-opacity="0.70" stroke-width="1.2" />
<circle cx="1320.0" cy="958.0" r="13.0" stroke-opacity="0.35" stroke-width="1" />
<circle cx="1688.0" cy="845.0" r="11.0" stroke-opacity="0.60" stroke-width="1.5" />
<circle cx="1688.0" cy="845.0" r="24.0" stroke-opacity="0.60" stroke-width="1.5" />
<circle cx="1680.0" cy="840.0" r="40.0" stroke-opacity="0.40" stroke-width="1.3" />
<path d="M1640 900Q1600 840 1650 790Q1690 760 1660 730Q1630 700 1660 690" stroke-opacity="0.45" stroke-width="1.3" />
<circle cx="1638.0" cy="712.0" r="12.0" stroke-opacity="0.50" stroke-width="1.3" />
<circle cx="1638.0" cy="712.0" r="5.0" stroke-opacity="0.50" stroke-width="1.2" />
<path d="M1650 700Q1700 720 1700 760" stroke-opacity="0.40" stroke-width="1.2" />
<text transform="translate(1735,890) rotate(-90)" font-family="Liberation Sans" font-weight="bold" font-size="40" textLength="199" lengthAdjust="spacingAndGlyphs" fill="none" stroke="#21a04f" stroke-opacity="0.6" stroke-width="1.3">openSUSE</text>
</g></svg>
<!-- DESKTOP ICONS -->
<svg class="a" style="left:24px;top:8px" width="66" height="64" viewBox="0 0 66 64">
 <rect x="23.3" y="7" width="17.3" height="5.5" rx="1.5" fill="none" stroke="#b1b6bb" stroke-width="2.2"/>
 <rect x="12.1" y="14.8" width="39.9" height="42.9" fill="#a8aeb3"/>
 <rect x="8" y="10.9" width="47.9" height="3.9" rx="0.8" fill="#b3b8bc"/>
 <rect x="12.1" y="14.6" width="39.9" height="1" fill="#8b9095"/>
 <rect x="17" y="19.2" width="3" height="35.2" rx="1.5" fill="#70757a"/>
 <rect x="25.8" y="19.2" width="3" height="35.2" rx="1.5" fill="#70757a"/>
 <rect x="34.9" y="19.2" width="3" height="35.2" rx="1.5" fill="#70757a"/>
 <rect x="43.8" y="19.2" width="3" height="35.2" rx="1.5" fill="#70757a"/>
</svg>
<svg class="a" style="left:132px;top:8px" width="72" height="64" viewBox="0 0 72 64">
 <path d="M8 5.9H32.9L35.9 10H64V21H8Z" fill="#0a76a6"/>
 <path d="M7 20.1H26L29.6 16H65.2V58H7Z" fill="#0ab4ec"/>
 <path d="M26 37.2L35.9 27.6L45.8 37.2M28.3 36.2V46.5H43.9V36.2M41.5 29V32.5" fill="none" stroke="#0d4663" stroke-width="1"/>
 <rect x="34.3" y="40.3" width="3.6" height="6.2" fill="#0a6c98" stroke="#0d4663" stroke-width="0.7"/>
</svg>
<div class="t" style="left:0;width:112px;top:77px;text-align:center;color:#fcfcfc;text-shadow:0 1px 2px #000">Корзина</div>
<div class="t" style="left:112px;width:112px;top:77px;text-align:center;color:#fcfcfc;text-shadow:0 1px 2px #000">Домашняя</div>
<div class="t" style="left:112px;width:112px;top:95px;text-align:center;color:#fcfcfc;text-shadow:0 1px 2px #000">папка</div>
<!-- BACKGROUND WINDOW -->
<div class="a" style="left:353px;top:89px;width:1241px;height:60px;background:linear-gradient(#f0f1f2 0px,#eceded 30px,#e4e5e6 52px);border-radius:5px 5px 0 0;box-shadow:0 0 14px 3px rgba(0,0,0,.35)"></div>
<svg class="a" style="left:359px;top:95px" width="16" height="16"><use href="#yast" width="16" height="16"/></svg>
<svg class="a" style="left:384px;top:96px" width="14" height="14" viewBox="0 0 14 14">
 <path d="M1 12.5L5 8.5" stroke="#b3b8bb" stroke-width="1.3"/>
 <path d="M2.2 6L8 11.8" stroke="#b3b8bb" stroke-width="1.6"/>
 <path d="M5 9L10.3 3.7" stroke="#b3b8bb" stroke-width="3.4"/>
 <path d="M8 1.2L12.8 6" stroke="#b3b8bb" stroke-width="2"/>
</svg>
<div class="t" style="left:822px;top:95px;font-size:13.5px;color:#b7bcbf">Центр управления YaST @ localhost.localdomain</div>
<svg class="a" style="left:1525px;top:98px" width="62" height="11" viewBox="0 0 62 11">
 <path d="M1.5 3L7 8.5L12.5 3" fill="none" stroke="#b9bec1" stroke-width="1.1"/>
 <path d="M25.5 8.5L31 3L36.5 8.5" fill="none" stroke="#b9bec1" stroke-width="1.1"/>
 <path d="M50 0.5L60 10.5M60 0.5L50 10.5" fill="none" stroke="#b9bec1" stroke-width="1.1"/>
</svg>
<div class="a" style="left:355px;top:119px;width:213px;height:30px;border:1px solid #c3c5c7;border-radius:3px;background:linear-gradient(#f3f3f4,#e6e7e8)"></div>
<svg class="a" style="left:547px;top:126px" width="12" height="12" viewBox="0 0 12 12"><path d="M6 1.5L10.5 6L6 10.5L1.5 6Z" fill="none" stroke="#4d5154" stroke-width="1"/></svg>
<div class="a" style="left:577px;top:125px;width:1010px;height:30px;border:1px solid #c3c5c7;border-radius:3px;background:linear-gradient(#f3f3f4,#e6e7e8)"></div>
<div class="a" style="left:1565px;top:126px;width:1px;height:20px;background:#cfd1d2"></div>
<div class="a" style="left:582px;top:126px;width:28px;height:20px;background:linear-gradient(135deg,#3c3f42,#232527)"></div>
<div class="a" style="left:585px;top:134px;width:17px;height:2px;background:#1d99f3"></div>
<div class="a" style="left:600px;top:132px;width:5px;height:5px;border-radius:50%;background:#fff"></div>
<div class="t" style="left:614px;top:133px;font-size:13.6px;color:#232627">Редактор sysconfig</div>
<!-- MAIN WINDOW -->
<div class="a" style="left:288px;top:141px;width:1342px;height:754px;background:#eff0f1;border-radius:5px 5px 0 0;box-shadow:0 8px 28px 3px rgba(0,0,0,.55)"></div>
<div class="a" style="left:288px;top:141px;width:1342px;height:29px;background:#445350;border-radius:5px 5px 0 0"></div>
<!-- title icons -->
<svg class="a" style="left:294px;top:146px" width="16" height="18" viewBox="0 0 16 18">
 <rect x="0" y="0" width="16" height="18" rx="1" fill="#8d9193"/>
 <rect x="1" y="1" width="14" height="13.5" rx="1" fill="#eceded"/>
 <circle cx="8" cy="7.5" r="5" fill="none" stroke="#5f6366" stroke-width="0.9"/>
 <path d="M8 4.3V7.8H10.6" fill="none" stroke="#5f6366" stroke-width="0.9"/>
 <rect x="1" y="15" width="14" height="3" fill="#575b5e"/>
 <rect x="3.5" y="16" width="9" height="1" fill="#c26a1f"/>
</svg>
<svg class="a" style="left:320px;top:148px" width="14" height="14" viewBox="0 0 14 14">
 <path d="M1 12.5L5 8.5" stroke="#fff" stroke-width="1.3"/>
 <path d="M2.2 6L8 11.8" stroke="#fff" stroke-width="1.6"/>
 <path d="M5 9L10.3 3.7" stroke="#fff" stroke-width="3.4"/>
 <path d="M8 1.2L12.8 6" stroke="#fff" stroke-width="2"/>
</svg>
<div class="t" style="left:698px;top:148px;color:#fcfcfc;font-size:13.2px">YaST2 - YaST Снимки файловой системы — YaST2 - snapper @ localhost.localdomain</div>
<svg class="a" style="left:1561px;top:149px" width="62" height="12" viewBox="0 0 62 12">
 <path d="M1.5 3.5L7 9L12.5 3.5" fill="none" stroke="#fcfcfc" stroke-width="1.3"/>
 <path d="M25 9L30.5 3.5L36 9" fill="none" stroke="#fcfcfc" stroke-width="1.3"/>
 <path d="M49.5 1L59.5 11M59.5 1L49.5 11" fill="none" stroke="#fcfcfc" stroke-width="1.3"/>
</svg>

<div class="t" style="left:298px;top:188px">Просмотр выбранного снимка</div>
<svg class="a" style="left:1602px;top:187px" width="16" height="16" viewBox="0 0 16 16">
 <path d="M4 1.2A7.28 7.28 0 1 1 4 15.2A2.4 7 0 0 0 4 1.2Z" fill="#020b0a"/>
</svg>

<div class="t" style="left:310px;top:222px">/</div>
<div class="t" style="left:310px;top:248px">7 &amp; 8</div>

<!-- tree box -->
<div class="a" style="left:311px;top:270px;width:414px;height:570px;background:#fcfcfc;border:1px solid #0ba9ee;border-radius:3px"></div>
<div class="a" style="left:372px;top:383px;width:352px;height:28px;background:#02adee"></div>
<div class="a" style="left:321px;top:271px;width:1px;height:7px;background:#bfc1c3"></div>
<div class="a" style="left:327px;top:285px;width:6px;height:1px;background:#bfc1c3"></div>
<div class="a" style="left:341px;top:299px;width:1px;height:7px;background:#bfc1c3"></div>
<div class="a" style="left:341px;top:319px;width:1px;height:134px;background:#bfc1c3"></div>
<div class="a" style="left:341px;top:452px;width:11px;height:1px;background:#bfc1c3"></div>
<div class="a" style="left:347px;top:313px;width:6px;height:1px;background:#bfc1c3"></div>
<div class="a" style="left:361px;top:327px;width:1px;height:7px;background:#bfc1c3"></div>
<div class="a" style="left:361px;top:347px;width:1px;height:78px;background:#bfc1c3"></div>
<div class="a" style="left:367px;top:341px;width:6px;height:1px;background:#bfc1c3"></div>
<div class="a" style="left:361px;top:369px;width:11px;height:1px;background:#bfc1c3"></div>
<div class="a" style="left:361px;top:397px;width:11px;height:1px;background:#bfc1c3"></div>
<div class="a" style="left:361px;top:424px;width:11px;height:1px;background:#bfc1c3"></div>
<svg class="a" style="left:316px;top:281px" width="12" height="8" viewBox="0 0 12 8"><path d="M1 1.5L6 6.5L11 1.5" fill="none" stroke="#31363b" stroke-width="1"/></svg>
<div class="cb" style="left:337px;top:277px"></div>
<svg class="a" style="left:362px;top:278px" width="14" height="14"><use href="#yast" width="14" height="14"/></svg>
<div class="t" style="left:383px;top:277px;color:#232627">etc</div>
<svg class="a" style="left:336px;top:309px" width="12" height="8" viewBox="0 0 12 8"><path d="M1 1.5L6 6.5L11 1.5" fill="none" stroke="#31363b" stroke-width="1"/></svg>
<div class="cb" style="left:357px;top:305px"></div>
<svg class="a" style="left:382px;top:306px" width="14" height="14"><use href="#yast" width="14" height="14"/></svg>
<div class="t" style="left:403px;top:305px;color:#232627">cups</div>
<svg class="a" style="left:358px;top:335px" width="8" height="12" viewBox="0 0 8 12"><path d="M1.5 1L6.5 6L1.5 11" fill="none" stroke="#31363b" stroke-width="1"/></svg>
<div class="cb" style="left:377px;top:333px"></div>
<svg class="a" style="left:402px;top:334px" width="14" height="14"><use href="#yast" width="14" height="14"/></svg>
<div class="t" style="left:423px;top:333px;color:#232627">ppd</div>
<div class="cb" style="left:377px;top:361px"></div>
<svg class="a" style="left:402px;top:362px" width="14" height="14"><use href="#yast" width="14" height="14"/></svg>
<div class="t" style="left:423px;top:361px;color:#232627">printers.conf</div>
<div class="cb" style="left:377px;top:389px;border-color:#fcfcfc;background:#fcfcfc"></div>
<svg class="a" style="left:402px;top:390px" width="14" height="14"><use href="#yast" width="14" height="14"/></svg>
<div class="t" style="left:423px;top:389px;color:#fcfcfc">subscriptions.conf</div>
<div class="cb" style="left:377px;top:417px"></div>
<svg class="a" style="left:402px;top:418px" width="14" height="14"><use href="#yast" width="14" height="14"/></svg>
<div class="t" style="left:423px;top:417px;color:#232627;letter-spacing:-0.14px">subscriptions.conf.O</div>
<div class="cb" style="left:357px;top:445px"></div>
<svg class="a" style="left:382px;top:446px" width="14" height="14"><use href="#yast" width="14" height="14"/></svg>
<div class="t" style="left:403px;top:445px;color:#232627">printcap</div>
<div class="t" style="left:742px;top:222px">yast printer</div>
<div class="t" style="left:742px;top:248px">Время изготовления первого снимка:</div>
<div class="t" style="left:742px;top:274px">Время изготовления второго снимка:</div>
<div class="t" style="right:304px;top:248px;letter-spacing:-0.42px">2023-04-23 18:15:47</div>
<div class="t" style="right:304px;top:274px;letter-spacing:-0.42px">2023-04-23 18:17:58</div>
<!-- group box -->
<div class="a" style="left:739px;top:296px;width:879px;height:548px;background:#f2f3f3;border:1px solid #c4c6c8;border-radius:3px"></div>
<!-- radios -->
<div class="a" style="left:750px;top:322px;width:16px;height:16px;border-radius:50%;background:#a9d8f2;border:1.5px solid #3daee9"></div>
<div class="a" style="left:754.5px;top:326.5px;width:7px;height:7px;border-radius:50%;background:#1b1d1e"></div>
<div class="a" style="left:750px;top:344px;width:16px;height:16px;border-radius:50%;background:#fcfcfc;border:1px solid #b4b6b8"></div>
<div class="a" style="left:750px;top:366px;width:16px;height:16px;border-radius:50%;background:#fcfcfc;border:1px solid #b4b6b8"></div>
<div class="t" style="left:772px;top:322px">Показать различия между первым и вторым снимками</div>
<div class="t" style="left:772px;top:344px;letter-spacing:-0.05px">Показать различия между первым снимком и текущей системой</div>
<div class="t" style="left:772px;top:366px;letter-spacing:-0.035px">Показать различия между вторым снимком и текущей системой</div>
<div class="t" style="left:752px;top:417px;letter-spacing:-0.21px">Содержимое файла изменилось.</div>
<!-- diff area -->
<div class="a" style="left:753px;top:443px;width:851px;height:344px;background:#fcfcfc;border:1px solid #bcbec0;border-radius:3px;overflow:hidden">
<div class="mono" style="left:4px;top:6px;width:845px;overflow:hidden;tab-size:80px"><span style="color:#f5192a">--- /.snapshots/7/snapshot/etc/cups/subscriptions.conf	2023-04-23 18:11:08.814012758 +0300</span>
<span style="color:#0a92d2">+++ /.snapshots/8/snapshot/etc/cups/subscriptions.conf	2023-04-23 18:17:53.055975163 +0300</span>
@@ -1,5 +1,5 @@
 # Subscription configuration file for CUPS v2.2.7
<span style="color:#f5192a">-# Written by cupsd on 2023-04-23 18:11</span>
<span style="color:#0a92d2">+# Written by cupsd on 2023-04-23 18:17</span>
 NextSubscriptionId 2
 &lt;Subscription 1&gt;
 Events printer-state-changed printer-restarted printer-shutdown printer-stopped printer-added printer-deleted printer-modified
@@ -8,5 +8,5 @@
 LeaseDuration 3600
 Interval 0
 ExpirationTime 1682266237
<span style="color:#f5192a">-NextEventId 1</span>
<span style="color:#0a92d2">+NextEventId 5</span>
 &lt;/Subscription&gt;</div>
<div class="a" style="left:0;top:321px;width:849px;height:1px;background:#e4e5e6"></div>
<div class="a" style="left:6px;top:329px;width:330px;height:8px;border-radius:5px;background:#c9cbcc;border:1px solid #9fa2a4"></div>
</div>
<!-- buttons -->
<div class="btn" style="left:1246px;top:796px;width:176px;height:32px;padding-top:7px">Восстановить из первого</div>
<div class="btn" style="left:1430px;top:796px;width:175px;height:32px;padding-top:7px">Восстановить из второго</div>
<div class="btn" style="left:299px;top:852px;width:82px;height:32px;padding-top:7px">Справка</div>
<div class="btn" style="left:1349px;top:852px;width:82px;height:32px;padding-top:7px">Отменить</div>
<div class="btn" style="left:1438px;top:852px;width:181px;height:32px;padding-top:7px">Восстановить выбранные</div>
<!-- TASKBAR -->
<div class="a" style="left:0;top:1036px;width:1918px;height:44px;background:#e7eeef"></div>
<svg class="a" style="left:6px;top:1042px" width="32" height="32" viewBox="0 0 32 32">
 <defs><clipPath id="lc"><circle cx="16" cy="16" r="15"/></clipPath></defs>
 <circle cx="16" cy="16" r="15.2" fill="none" stroke="#1b1d1e" stroke-width="1.5"/>
 <path clip-path="url(#lc)" d="M0 4L6 6.3L8.5 5.6C15 6 24.5 8.5 27.4 17.3L26.9 20.6C21 24.5 14 24.8 6 24.8L0 27Z" fill="#1b1d1e"/>
 <circle cx="19.7" cy="13.7" r="3.9" fill="#e7eeef"/>
 <circle cx="19.7" cy="13.7" r="2.7" fill="#1b1d1e"/>
 <path d="M18.6 13.6A1.2 1.2 0 0 1 20.8 13.6Z" fill="#e7eeef"/>
 <path d="M11.3 16.9Q18 21.6 26.8 19.4" fill="none" stroke="#e7eeef" stroke-width="1.2"/>
</svg>
<div class="a" style="left:44px;top:1040px;width:30px;height:17px;background:#5bc4ee"></div>
<div class="a" style="left:49px;top:1042px;width:20px;height:12px;background:#177ea8;border:1px solid #0e5f80"></div>
<div class="a" style="left:44px;top:1058px;width:30px;height:17px;background:#d5d9db"></div>
<!-- task buttons -->
<div class="a" style="left:80px;top:1036px;width:50px;height:44px;background:#dadfe0"></div>
<div class="a" style="left:184px;top:1036px;width:50px;height:44px;background:#dadfe0"></div>
<div class="a" style="left:288px;top:1036px;width:50px;height:44px;background:#dadfe0"></div>
<div class="a" style="left:340px;top:1036px;width:50px;height:44px;background:#cfd3d4"></div>
<div class="a" style="left:340px;top:1036px;width:50px;height:3px;background:#a5a9aa"></div>
<div class="a" style="left:392px;top:1036px;width:50px;height:44px;background:#80d5ef"></div>
<div class="a" style="left:392px;top:1036px;width:50px;height:3px;background:#02b8f0"></div>
<!-- sliders icon -->
<div class="a" style="left:91px;top:1044px;width:28px;height:28px;background:linear-gradient(160deg,#44474a,#1f2123);border-radius:1px"></div>
<div class="a" style="left:94px;top:1052px;width:18px;height:2px;background:#1aa4ea"></div>
<div class="a" style="left:108px;top:1051px;width:4px;height:4px;background:#fff;border-radius:50%;transform:scale(1.5)"></div>
<div class="a" style="left:94px;top:1060px;width:8px;height:2px;background:#1aa4ea"></div>
<div class="a" style="left:102px;top:1060px;width:14px;height:2px;background:#55585b"></div>
<div class="a" style="left:99px;top:1059px;width:4px;height:4px;background:#fff;border-radius:50%;transform:scale(1.5)"></div>
<!-- discover bag -->
<svg class="a" style="left:140px;top:1040px" width="40" height="36" viewBox="0 0 40 36">
 <defs><linearGradient id="bgg" x1="0" y1="0" x2="0" y2="1"><stop offset="0" stop-color="#05b3f2"/><stop offset="1" stop-color="#0a88e6"/></linearGradient></defs>
 <path d="M12.3 9V7.5Q12.3 4.3 17.3 4.3Q22 4.3 22 7.5V9" fill="none" stroke="#12aaea" stroke-width="1.2"/>
 <path d="M6.7 8.3H27L29 10.7H5Z" fill="#0a5c9c"/>
 <rect x="5" y="10.7" width="24" height="21" fill="url(#bgg)"/>
 <rect x="5" y="29.7" width="24" height="2" fill="#0a6fc0"/>
 <path d="M18.2 18.2L21.3 20.5L18.2 22.8" fill="none" stroke="#e6f6fe" stroke-width="1.3"/>
</svg>
<!-- folder -->
<svg class="a" style="left:194px;top:1044px" width="30" height="28" viewBox="0 0 30 28">
 <path d="M0 0H14L16 2H30V10H0Z" fill="#0f6fa0"/>
 <path d="M1 4H29V8H1Z" fill="#fbfdfe"/>
 <path d="M0 9H30V28H0Z" fill="#14a7e6"/>
 <path d="M0 22H30V28H0Z" fill="#128bc6"/>
</svg>
<!-- firefox -->
<svg class="a" style="left:240px;top:1038px" width="40" height="40" viewBox="0 0 40 40">
 <defs><radialGradient id="ffg" cx="0.72" cy="0.28" r="0.85"><stop offset="0" stop-color="#ffde3a"/><stop offset="0.45" stop-color="#ff8a1e"/><stop offset="0.75" stop-color="#ff4a3a"/><stop offset="1" stop-color="#ff1f63"/></radialGradient></defs>
 <circle cx="21" cy="20.5" r="14.6" fill="url(#ffg)"/>
 <path d="M4 4H25.6C24.5 7.5 22.5 8.5 21.5 10.5L19 12.3L16.2 10.8L15.6 10L13.2 13.2L11.2 9L7.5 15L4 16Z" fill="#e7eeef"/>
 <path d="M25.6 4.2C31 8 36.2 13 35.9 21.5L32 21Q30 13.5 21.5 10.5C22.5 8.5 24.5 7.5 25.6 4.2Z" fill="#ffd52a"/>
 <path d="M7.5 15L11.2 9L13.2 13.2L15.6 10L18 14.5Z" fill="#ff9a12"/>
 <circle cx="20.7" cy="19.8" r="6.4" fill="#7c52f2"/>
 <path d="M16 14Q20 11.5 25 14L26 17Q22 16 20.5 18Z" fill="#b83ee6"/>
 <path d="M8 15.5Q14 12 20.5 16.8Q17 18.5 15 22.5Q11 19 8 15.5Z" fill="#ffa51a"/>
</svg>
<!-- system monitor -->
<div class="a" style="left:299px;top:1045px;width:27px;height:27px;background:#31363b"></div>
<svg class="a" style="left:299px;top:1045px" width="27" height="27" viewBox="0 0 27 27"><path d="M0 27V12C2 8 5 8 7 11C9 15 11 18 14 18C17 18 18 14 21 15C24 16 25 18 27 19V27Z" fill="#35b984"/><path d="M1 24H26" stroke="#7fdcb5" stroke-width="0.8" stroke-dasharray="1 1.5"/></svg>
<!-- yast green -->
<svg class="a" style="left:352px;top:1045px" width="26" height="26"><use href="#yast" width="26" height="26"/></svg>
<!-- snapper disk -->
<svg class="a" style="left:405px;top:1044px" width="24" height="29" viewBox="0 0 24 29">
 <rect x="0" y="0" width="24" height="29" rx="1" fill="#8e9396"/>
 <rect x="1.5" y="1.5" width="21" height="20" rx="2" fill="#eef0f0"/>
 <circle cx="12" cy="11.5" r="8" fill="none" stroke="#4f5356" stroke-width="1.2"/>
 <path d="M12 5.5V11.8H16.5" fill="none" stroke="#4f5356" stroke-width="1.2"/>
 <rect x="1" y="22" width="22" height="7" fill="#5a5e61"/>
 <rect x="5" y="25" width="14" height="1.5" fill="#f39c1f"/>
</svg>
<!-- tray -->
<svg class="a" style="left:1618px;top:1049px" width="19" height="18" viewBox="0 0 19 18">
 <circle cx="5.6" cy="2.3" r="1.3" fill="#232627"/><circle cx="1.9" cy="6.7" r="1.1" fill="#232627"/>
 <circle cx="6.1" cy="12.8" r="4.5" fill="none" stroke="#232627" stroke-width="1.1"/>
 <path d="M2.3 13.3L4.2 12.2L5.4 13.4L4.4 15.2L5.2 16.8L3.6 16.4Q2 15 2.3 13.3Z M7.6 10.2L9.6 10.6L10.3 12.8L8.8 14.2L8 12.4Z" fill="#232627"/>
 <path d="M12.3 2.2L16.6 5.8L12.3 9.6" fill="none" stroke="#232627" stroke-width="2.4"/>
</svg>
<svg class="a" style="left:1649px;top:1049px" width="18" height="18" viewBox="0 0 18 18">
 <rect x="0.9" y="6" width="1.9" height="5.7" fill="#232627"/>
 <path d="M4.2 6.5L10 1V16.8L4.2 11.2Z" fill="#232627"/>
 <path d="M11.8 5.2Q13.8 8.9 11.8 12.6M12.6 1.8Q17.8 8.9 12.6 16" fill="none" stroke="#9da0a2" stroke-width="0.9"/>
</svg>
<svg class="a" style="left:1683px;top:1050px" width="11" height="16" viewBox="0 0 11 16">
 <rect x="1.2" y="0" width="7.7" height="8.3" fill="#232627"/>
 <rect x="2.6" y="2" width="1" height="4" fill="#e7eeef"/><rect x="6.5" y="2" width="1" height="4" fill="#e7eeef"/><rect x="4.5" y="4" width="1.2" height="1.3" fill="#e7eeef"/>
 <rect x="0.65" y="8.3" width="8.9" height="7" fill="none" stroke="#232627" stroke-width="1.3"/>
 <rect x="2.3" y="12.7" width="5.6" height="1" fill="#232627"/>
</svg>
<div class="t" style="left:1707px;top:1046px;font-size:23px;line-height:26px;color:#232627;letter-spacing:-0.6px;transform:scaleX(0.86);transform-origin:0 0">us</div>
<svg class="a" style="left:1739px;top:1049px" width="18" height="18" viewBox="0 0 18 18">
 <rect x="1.6" y="1.6" width="4.2" height="5" fill="none" stroke="#232627" stroke-width="1.2"/>
 <circle cx="3.7" cy="3.9" r="0.8" fill="#232627"/>
 <path d="M3.6 6.7V14.8Q3.6 16.3 5.1 16.3H12.9" fill="none" stroke="#232627" stroke-width="1.1"/>
 <path d="M1.4 8.2V13.9" stroke="#232627" stroke-width="1.2"/>
 <path d="M7.3 1.9H16.2V13.2" fill="none" stroke="#232627" stroke-width="1.2"/>
 <path d="M5.2 12.9H16.8" stroke="#232627" stroke-width="1.5"/>
 <rect x="7.5" y="13" width="3.4" height="2.8" fill="#232627"/>
</svg>
<svg class="a" style="left:1769px;top:1054px" width="14" height="8" viewBox="0 0 14 8"><path d="M7 0.5L13.5 7.5H0.5Z" fill="#232627"/></svg>
<div class="t" style="left:1808px;top:1044px;font-size:16px;line-height:18px;color:#232627">18:23</div>
<div class="t" style="left:1795px;top:1060px;font-size:13px;line-height:14px;color:#232627">23.04.2023</div>
<div class="a" style="left:1884px;top:1050px;width:16px;height:16px;border:1.3px solid #232627"></div>
<div class="a" style="left:1886px;top:1062px;width:12px;height:1.2px;background:#232627"></div>
</body></html>
